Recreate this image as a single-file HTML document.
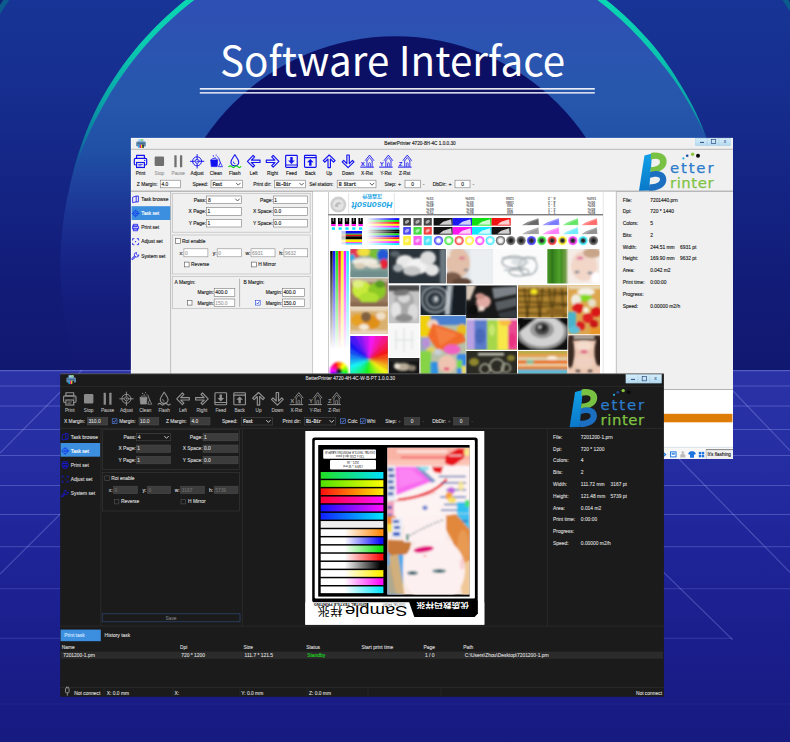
<!DOCTYPE html>
<html><head><meta charset="utf-8"><title>Software Interface</title>
<style>
*{box-sizing:border-box;margin:0;padding:0}
html,body{width:790px;height:742px;overflow:hidden}
body{position:relative;background:#14287e;font-family:"Liberation Sans",sans-serif;}
.abs{position:absolute}
#bg{position:absolute;left:0;top:0;width:790px;height:742px;overflow:hidden;background:linear-gradient(180deg,#15308c 0%,#14267f 45%,#151a78 52%,#1b2a9c 53%,#1c2796 75%,#171b86 100%)}
#title{position:absolute;left:-2.4px;top:27.4px;width:790px;text-align:center;color:#fff;font-family:"Noto Sans CJK SC","Liberation Sans",sans-serif;font-weight:400;font-size:40.3px;line-height:64px;letter-spacing:0.1px;white-space:nowrap}
.ul{position:absolute;left:199.5px;width:395.5px;height:1.5px;background:#fff}
/* light window */
#lw{position:absolute;left:131px;top:138px;width:602px;height:320px;background:#f0f0f0;overflow:hidden;font-size:6.5px;color:#222}
#dw{position:absolute;left:60px;top:373px;width:603px;height:324px;background:#1b1b1b;overflow:hidden;font-size:6.5px;color:#ddd}
</style></head><body>
<div id="bg"><svg class="abs" style="left:0;top:0" width="790" height="742" viewBox="0 0 790 742">
<defs>
<linearGradient id="gcorner" gradientUnits="userSpaceOnUse" x1="0" y1="0" x2="0" y2="370"><stop offset="0" stop-color="#101f74"/><stop offset="1" stop-color="#101668"/></linearGradient>
<linearGradient id="gout" gradientUnits="userSpaceOnUse" x1="0" y1="0" x2="0" y2="370"><stop offset="0" stop-color="#173596"/><stop offset="0.27" stop-color="#162d8e"/><stop offset="0.5" stop-color="#142484"/><stop offset="0.76" stop-color="#121c78"/><stop offset="1" stop-color="#111870"/></linearGradient>
<linearGradient id="gin" gradientUnits="userSpaceOnUse" x1="0" y1="0" x2="0" y2="370"><stop offset="0" stop-color="#2f4fb4"/><stop offset="0.16" stop-color="#2a55b0"/><stop offset="0.27" stop-color="#2657ac"/><stop offset="0.41" stop-color="#2050a6"/><stop offset="0.54" stop-color="#1d3a98"/><stop offset="0.68" stop-color="#172688"/><stop offset="0.81" stop-color="#141d7c"/><stop offset="1" stop-color="#12186f"/></linearGradient>
<linearGradient id="gteal" gradientUnits="userSpaceOnUse" x1="0" y1="0" x2="0" y2="200"><stop offset="0" stop-color="#0ad6b2"/><stop offset="0.23" stop-color="#0bcab0"/><stop offset="0.5" stop-color="#0aa6a8"/><stop offset="0.7" stop-color="#0c78a0"/><stop offset="0.88" stop-color="#14509c" stop-opacity="0.6"/><stop offset="1" stop-color="#1a3c98" stop-opacity="0"/></linearGradient>
<linearGradient id="gfloor" gradientUnits="userSpaceOnUse" x1="0" y1="370" x2="0" y2="742"><stop offset="0" stop-color="#2a32a6"/><stop offset="0.22" stop-color="#262ea4"/><stop offset="0.48" stop-color="#1f2498"/><stop offset="0.73" stop-color="#1a1e8c"/><stop offset="1" stop-color="#171a80"/></linearGradient>
</defs>
<rect width="790" height="742" fill="url(#gcorner)"/>
<circle cx="395.9" cy="264.8" r="471" fill="url(#gout)" stroke="#0b5c8c" stroke-width="5"/>
<circle cx="395.9" cy="264.8" r="335.5" fill="url(#gin)"/>
<polygon points="69,189.33 70.51,182.35 72.17,175.4 73.98,168.49 75.93,161.61 78.03,154.78 80.27,147.98 82.63,141.21 85.14,134.5 87.78,127.83 90.57,121.22 93.51,114.67 96.6,108.18 99.96,101.83 103.46,95.56 107.09,89.36 110.85,83.23 114.74,77.19 118.76,71.23 122.91,65.36 127.18,59.57 131.58,53.89 136.12,48.31 140.78,42.83 145.55,37.45 150.43,32.17 155.43,26.99 160.53,21.93 165.75,16.97 171.06,12.13 176.48,7.4 182,2.78 187.61,-1.71 193.32,-6.09 199.13,-10.34 205.02,-14.47 210.99,-18.47 217.06,-22.35 223.2,-26.09 229.42,-29.7 235.72,-33.18 242.09,-36.51 248.54,-39.72 255.05,-42.78 261.62,-45.71 268.25,-48.49 274.94,-51.14 281.69,-53.64 288.49,-55.99 295.33,-58.21 302.22,-60.27 309.16,-62.19 316.13,-63.96 323.14,-65.58 330.18,-67.06 337.25,-68.38 344.35,-69.55 351.47,-70.57 358.61,-71.44 365.77,-72.16 372.94,-72.72 380.13,-73.13 387.32,-73.39 394.51,-73.5 401.7,-73.45 408.9,-73.25 416.08,-72.9 423.26,-72.39 430.42,-71.73 437.57,-70.92 444.7,-69.96 451.81,-68.85 458.89,-67.58 465.95,-66.17 472.97,-64.6 479.95,-62.89 486.9,-61.03 493.81,-59.02 500.68,-56.87 507.49,-54.56 514.26,-52.12 520.97,-49.53 527.63,-46.8 534.22,-43.93 540.76,-40.92 547.23,-37.77 553.63,-34.48 559.95,-31.06 566.21,-27.5 572.38,-23.81 578.47,-19.98 584.49,-16.03 590.41,-11.95 596.25,-7.75 601.99,-3.42 607.64,1.03 613.2,5.6 618.65,10.29 624.01,15.09 629.26,20.01 634.41,25.03 639.44,30.16 644.37,35.4 649.19,40.75 653.88,46.19 658.35,51.83 662.66,57.58 666.84,63.42 670.89,69.35 674.82,75.36 678.61,81.44 682.29,87.59 685.92,93.76 689.42,100.01 692.78,106.33 695.99,112.73 698.95,119.24 701.77,125.81 704.44,132.44 706.97,139.12 706.97,139.12 704.01,132.62 700.92,126.2 697.7,119.84 694.34,113.56 690.97,107.3 687.48,101.1 683.86,94.98 680.11,88.94 676.15,83.03 672.05,77.23 667.84,71.52 663.5,65.9 659.05,60.39 654.48,54.97 649.84,49.62 645.2,44.27 640.44,39.03 635.58,33.89 630.61,28.85 625.53,23.92 620.35,19.1 615.07,14.39 609.69,9.79 604.21,5.31 598.64,0.95 592.98,-3.3 587.23,-7.42 581.39,-11.42 575.47,-15.3 569.47,-19.05 563.39,-22.67 557.24,-26.16 551.02,-29.53 544.72,-32.76 538.36,-35.86 531.93,-38.82 525.45,-41.64 518.9,-44.33 512.3,-46.87 505.65,-49.28 498.94,-51.54 492.19,-53.66 485.4,-55.64 478.56,-57.47 471.69,-59.15 464.79,-60.69 457.85,-62.08 450.88,-63.33 443.89,-64.42 436.88,-65.37 429.85,-66.16 422.81,-66.81 415.75,-67.31 408.68,-67.65 401.61,-67.85 394.53,-67.9 387.46,-67.79 380.39,-67.54 373.32,-67.13 366.27,-66.58 359.23,-65.87 352.21,-65.02 345.2,-64.01 338.22,-62.86 331.27,-61.56 324.34,-60.11 317.45,-58.52 310.59,-56.78 303.77,-54.89 297,-52.86 290.26,-50.68 283.58,-48.37 276.94,-45.91 270.36,-43.31 263.84,-40.57 257.38,-37.69 250.98,-34.68 244.64,-31.53 238.37,-28.24 232.18,-24.83 226.05,-21.28 220,-17.61 214.03,-13.82 208.15,-9.89 202.34,-5.84 196.63,-1.67 191,2.62 185.47,7.03 180.03,11.56 174.68,16.2 169.44,20.95 164.3,25.82 159.27,30.79 154.34,35.87 149.52,41.05 144.81,46.33 140.21,51.72 135.73,57.2 131.36,62.76 127.09,68.41 122.94,74.15 118.91,79.97 115.01,85.88 111.23,91.87 107.59,97.95 104.07,104.1 100.68,110.32 97.29,116.55 94.01,122.84 90.87,129.21 87.86,135.64 84.98,142.14 82.25,148.71 79.68,155.34 77.26,162.04 74.98,168.79 72.84,175.59 70.85,182.44 69,189.33" fill="url(#gteal)"/>
<circle cx="395.4" cy="265.9" r="229.6" fill="#0b1065"/>
<rect x="0" y="370" width="790" height="372" fill="url(#gfloor)"/>
<g stroke="#aab4ff" stroke-opacity="0.3" stroke-width="1.15" fill="none">
<path d="M0 370.6H790" stroke-opacity="0.34"/><path d="M0 386H790M0 406H790M0 429.5H790M0 455.5H790M0 485.5H790M0 514.5H790"/>
<path d="M0 546.6H790" stroke-opacity="0.22"/><path d="M0 588.6H790" stroke-opacity="0.16"/><path d="M0 638.4H732.5" stroke-opacity="0.14"/><path d="M0 704H790" stroke-opacity="0.06"/>
<path d="M713 370L790 450.5M592 370L790 572.4M457 370L732.5 639.7"/>
<path d="M82 370L0 453M205 370L0 574"/>
</g>
</svg></div>
<div id="title">Software Interface</div>
<svg class="abs" style="left:0;top:80px" width="790" height="20"><rect x="199.8" y="8.1" width="395" height="1.5" fill="#fff"/><rect x="199.8" y="12.1" width="395" height="1.5" fill="#ebe8f6"/></svg>
<svg class="abs" style="left:0;top:0" width="790" height="742" viewBox="0 0 790 742" font-family="Liberation Sans, sans-serif">
<g id="lightwin"><rect x="131" y="138" width="602" height="320.9" fill="#f0f0f0"/>
<line x1="131.3" y1="138" x2="131.3" y2="458.9" stroke="#fff" stroke-width="0.6" /><line x1="131" y1="138.3" x2="733" y2="138.3" stroke="#fff" stroke-width="0.6" />
<line x1="131" y1="149.3" x2="733" y2="149.3" stroke="#a0a0a0" stroke-width="0.7" />
<g transform="translate(141 143.5)"><rect x="-2.6" y="-4.4" width="5.2" height="3" fill="#9cd0f4"/><rect x="0.2" y="-4.4" width="1.6" height="1.6" fill="#8cd848"/><rect x="-4.8" y="-2" width="9.6" height="5" rx="1.2" fill="#5f8aae"/><rect x="-3.6" y="-0.6" width="7.2" height="1" fill="#3f6a8e"/><rect x="-2.7" y="1.2" width="1.35" height="3.3" fill="#10b4ea"/><rect x="-1.35" y="1.2" width="1.35" height="3.3" fill="#e8188c"/><rect x="0" y="1.2" width="1.35" height="3.3" fill="#f8d410"/><rect x="1.35" y="1.2" width="1.35" height="3.3" fill="#1a1a1a"/></g>
<text x="420" y="144.89" font-size="4.7" fill="#222" text-anchor="middle" stroke="#222" stroke-width="0.13" >BetterPrinter 4720-8H-4C 1.0.0.30</text>
<defs><linearGradient id="gbtn" x1="0" y1="0" x2="0" y2="1"><stop offset="0" stop-color="#d8eefa"/><stop offset="0.5" stop-color="#c6e4f6"/><stop offset="1" stop-color="#b2d8ee"/></linearGradient></defs>
<rect x="695.3" y="138.2" width="35.3" height="7.5" fill="url(#gbtn)" stroke="#a8cce0" stroke-width="0.4"/>
<line x1="707.1" y1="138.2" x2="707.1" y2="145.7" stroke="#a0c6dc" stroke-width="0.4" /><line x1="718.9" y1="138.2" x2="718.9" y2="145.7" stroke="#a0c6dc" stroke-width="0.4" />
<line x1="700" y1="142.4" x2="704" y2="142.4" stroke="#1c3c6c" stroke-width="0.9" />
<rect x="711.3" y="139.4" width="4.4" height="4.2" fill="none" stroke="#2c4c7c" stroke-width="0.7"/>
<text x="724.9" y="143.4" font-size="5" fill="#3c5c8c" text-anchor="middle" stroke="#3c5c8c" stroke-width="0.13" >x</text>
<g transform="translate(140.5 161.3)" ><rect x="-3.9" y="-6" width="7.8" height="3.2" stroke="#1212f0" stroke-width="1.15" fill="none" stroke-linejoin="round" stroke-linecap="round"/><rect x="-6.2" y="-2.9" width="12.4" height="6.6" rx="1.2" stroke="#1212f0" stroke-width="1.15" fill="none" stroke-linejoin="round" stroke-linecap="round"/><rect x="-3.9" y="1.2" width="7.8" height="5" fill="#f0f0f0" stroke="#1212f0" stroke-width="1.15"/><path d="M-2.2 3.2H2.2M-2.2 4.6H1" stroke="#1212f0" stroke-width="0.7"/><circle cx="4.2" cy="-0.9" r="0.7" fill="#1212f0"/></g>
<text x="140.5" y="174.79" font-size="4.7" fill="#222" text-anchor="middle" stroke="#222" stroke-width="0.13" >Print</text>
<g transform="translate(159.37 161.3)" ><rect x="-4.7" y="-4.7" width="9.4" height="9.4" rx="1.1" fill="#707070"/></g>
<text x="159.37" y="174.79" font-size="4.7" fill="#9a9a9a" text-anchor="middle" stroke="#9a9a9a" stroke-width="0.13" >Stop</text>
<g transform="translate(178.24 161.3)" ><rect x="-3.9" y="-6" width="2.3" height="12" rx="0.5" fill="#707070"/><rect x="1.7" y="-6" width="2.3" height="12" rx="0.5" fill="#707070"/></g>
<text x="178.24" y="174.79" font-size="4.7" fill="#9a9a9a" text-anchor="middle" stroke="#9a9a9a" stroke-width="0.13" >Pause</text>
<g transform="translate(197.11 161.3)" ><circle r="4.5" stroke="#1212f0" stroke-width="0.95" fill="none" stroke-linejoin="round" stroke-linecap="round"/><circle r="2" stroke="#1212f0" stroke-width="0.85" fill="none" stroke-linejoin="round" stroke-linecap="round"/><circle r="0.75" fill="#1212f0"/><path d="M0 -6.7V-2.6M0 6.7V2.6M-6.7 0H-2.6M6.7 0H2.6" stroke="#1212f0" stroke-width="0.95" fill="none" stroke-linejoin="round" stroke-linecap="round"/></g>
<text x="197.11" y="174.79" font-size="4.7" fill="#222" text-anchor="middle" stroke="#222" stroke-width="0.13" >Adjust</text>
<g transform="translate(215.98 161.3)" ><path d="M-5.3 -1.4H1.7L1.2 5.3H-4.7Z" fill="#1212f0" stroke="#1212f0" stroke-width="0.7" stroke-linejoin="round"/><path d="M-4.9 -1.5C-4.4 -3.5 0.8 -3.5 1.4 -1.5" stroke="#1212f0" stroke-width="0.8" fill="none" stroke-linejoin="round" stroke-linecap="round"/><circle cx="-2.6" cy="-5.4" r="0.65" fill="#1212f0"/><circle cx="0.2" cy="-6.2" r="0.55" fill="#1212f0"/><circle cx="-0.9" cy="-4.1" r="0.55" fill="#1212f0"/><circle cx="1.6" cy="-4.6" r="0.5" fill="#1212f0"/><path d="M2.7 -3.4L4.5 1.6" stroke="#1212f0" stroke-width="0.9" fill="none" stroke-linejoin="round" stroke-linecap="round"/><path d="M4.3 1.3L6.5 5.4H2.5Z" fill="#f0f0f0" stroke="#1212f0" stroke-width="0.8" stroke-linejoin="round"/></g>
<text x="215.98" y="174.79" font-size="4.7" fill="#222" text-anchor="middle" stroke="#222" stroke-width="0.13" >Clean</text>
<g transform="translate(234.85 161.3)" ><path d="M0 -6.6C1.6 -4 3.9 -1.4 3.9 0.7A3.9 3.9 0 0 1 -3.9 0.7C-3.9 -1.4 -1.6 -4 0 -6.6Z" stroke="#1212f0" stroke-width="1.15" fill="none" stroke-linejoin="round" stroke-linecap="round"/><path d="M-1.6 0.6A1.7 1.7 0 0 0 0 2.4" stroke="#1212f0" stroke-width="0.8" fill="none" stroke-linejoin="round" stroke-linecap="round"/><path d="M-6 5.4Q-4.5 3.6 -3 5.4T0 5.4T3 5.4T6 5.4" stroke="#16d416" stroke-width="1.2" fill="none" stroke-linecap="round"/></g>
<text x="234.85" y="174.79" font-size="4.7" fill="#222" text-anchor="middle" stroke="#222" stroke-width="0.13" >Flash</text>
<g transform="translate(253.72 161.3)" ><path d="M-6.3 0L-0.6 -5.9L0.9 -4.4L-2.3 -1.2H6.3V1.2H-2.3L0.9 4.4L-0.6 5.9Z" stroke="#1212f0" stroke-width="1.15" fill="none" stroke-linejoin="round" stroke-linecap="round"/></g>
<text x="253.72" y="174.79" font-size="4.7" fill="#222" text-anchor="middle" stroke="#222" stroke-width="0.13" >Left</text>
<g transform="translate(272.59 161.3)" ><path d="M-6.3 0L-0.6 -5.9L0.9 -4.4L-2.3 -1.2H6.3V1.2H-2.3L0.9 4.4L-0.6 5.9Z" transform="scale(-1 1)" stroke="#1212f0" stroke-width="1.15" fill="none" stroke-linejoin="round" stroke-linecap="round"/></g>
<text x="272.59" y="174.79" font-size="4.7" fill="#222" text-anchor="middle" stroke="#222" stroke-width="0.13" >Right</text>
<g transform="translate(291.46 161.3)" ><rect x="-5.8" y="-6" width="11.6" height="12" rx="0.8" stroke="#1212f0" stroke-width="1.15" fill="none" stroke-linejoin="round" stroke-linecap="round"/><path d="M-5.8 3.7H5.8" stroke="#1212f0" stroke-width="1.15" fill="none" stroke-linejoin="round" stroke-linecap="round"/><path d="M-1.2 -4.2H1.2V-0.8H3.3L0 2.6L-3.3 -0.8H-1.2Z" fill="#1212f0"/></g>
<text x="291.46" y="174.79" font-size="4.7" fill="#222" text-anchor="middle" stroke="#222" stroke-width="0.13" >Feed</text>
<g transform="translate(310.33 161.3)" ><rect x="-5.8" y="-6" width="11.6" height="12" rx="0.8" stroke="#1212f0" stroke-width="1.15" fill="none" stroke-linejoin="round" stroke-linecap="round"/><path d="M-5.8 -3.7H5.8" stroke="#1212f0" stroke-width="1.15" fill="none" stroke-linejoin="round" stroke-linecap="round"/><path d="M-1.2 4.4H1.2V1H3.3L0 -2.4L-3.3 1H-1.2Z" fill="#1212f0"/></g>
<text x="310.33" y="174.79" font-size="4.7" fill="#222" text-anchor="middle" stroke="#222" stroke-width="0.13" >Back</text>
<g transform="translate(329.2 161.3)" ><path d="M-6.3 0L-0.6 -5.9L0.9 -4.4L-2.3 -1.2H6.3V1.2H-2.3L0.9 4.4L-0.6 5.9Z" transform="rotate(90)" stroke="#1212f0" stroke-width="1.15" fill="none" stroke-linejoin="round" stroke-linecap="round"/></g>
<text x="329.2" y="174.79" font-size="4.7" fill="#222" text-anchor="middle" stroke="#222" stroke-width="0.13" >Up</text>
<g transform="translate(348.07 161.3)" ><path d="M-6.3 0L-0.6 -5.9L0.9 -4.4L-2.3 -1.2H6.3V1.2H-2.3L0.9 4.4L-0.6 5.9Z" transform="rotate(-90)" stroke="#1212f0" stroke-width="1.15" fill="none" stroke-linejoin="round" stroke-linecap="round"/></g>
<text x="348.07" y="174.79" font-size="4.7" fill="#222" text-anchor="middle" stroke="#222" stroke-width="0.13" >Down</text>
<g transform="translate(366.94 161.3)" ><path d="M-1.6 -0.9L2.6 -6.2L6.8 -0.9" stroke="#1212f0" stroke-width="0.9" fill="none" stroke-linejoin="round" stroke-linecap="round"/><path d="M0 -0.4L2.6 -3.8L5.2 -0.4" stroke="#1212f0" stroke-width="0.7" fill="none" stroke-linejoin="round" stroke-linecap="round"/><path d="M0 -0.4V5M5.2 -0.4V5" stroke="#1212f0" stroke-width="0.8" fill="none" stroke-linejoin="round" stroke-linecap="round"/><path d="M1.7 5V2.3A0.9 0.9 0 0 1 3.5 2.3V5" stroke="#1212f0" stroke-width="0.7" fill="none" stroke-linejoin="round" stroke-linecap="round"/><text x="-4.1" y="4.6" font-size="6" font-weight="bold" text-anchor="middle" fill="#1212f0">X</text><path d="M-6.7 5.8H6.9" stroke="#1212f0" stroke-width="1"/></g>
<text x="366.94" y="174.79" font-size="4.7" fill="#222" text-anchor="middle" stroke="#222" stroke-width="0.13" >X-Rst</text>
<g transform="translate(385.81 161.3)" ><path d="M-1.6 -0.9L2.6 -6.2L6.8 -0.9" stroke="#1212f0" stroke-width="0.9" fill="none" stroke-linejoin="round" stroke-linecap="round"/><path d="M0 -0.4L2.6 -3.8L5.2 -0.4" stroke="#1212f0" stroke-width="0.7" fill="none" stroke-linejoin="round" stroke-linecap="round"/><path d="M0 -0.4V5M5.2 -0.4V5" stroke="#1212f0" stroke-width="0.8" fill="none" stroke-linejoin="round" stroke-linecap="round"/><path d="M1.7 5V2.3A0.9 0.9 0 0 1 3.5 2.3V5" stroke="#1212f0" stroke-width="0.7" fill="none" stroke-linejoin="round" stroke-linecap="round"/><text x="-4.1" y="4.6" font-size="6" font-weight="bold" text-anchor="middle" fill="#1212f0">Y</text><path d="M-6.7 5.8H6.9" stroke="#1212f0" stroke-width="1"/></g>
<text x="385.81" y="174.79" font-size="4.7" fill="#222" text-anchor="middle" stroke="#222" stroke-width="0.13" >Y-Rst</text>
<g transform="translate(404.68 161.3)" ><path d="M-1.6 -0.9L2.6 -6.2L6.8 -0.9" stroke="#1212f0" stroke-width="0.9" fill="none" stroke-linejoin="round" stroke-linecap="round"/><path d="M0 -0.4L2.6 -3.8L5.2 -0.4" stroke="#1212f0" stroke-width="0.7" fill="none" stroke-linejoin="round" stroke-linecap="round"/><path d="M0 -0.4V5M5.2 -0.4V5" stroke="#1212f0" stroke-width="0.8" fill="none" stroke-linejoin="round" stroke-linecap="round"/><path d="M1.7 5V2.3A0.9 0.9 0 0 1 3.5 2.3V5" stroke="#1212f0" stroke-width="0.7" fill="none" stroke-linejoin="round" stroke-linecap="round"/><text x="-4.1" y="4.6" font-size="6" font-weight="bold" text-anchor="middle" fill="#1212f0">Z</text><path d="M-6.7 5.8H6.9" stroke="#1212f0" stroke-width="1"/></g>
<text x="404.68" y="174.79" font-size="4.7" fill="#222" text-anchor="middle" stroke="#222" stroke-width="0.13" >Z-Rst</text>
<text x="157.5" y="185.76" font-size="4.9" fill="#222" text-anchor="end" stroke="#222" stroke-width="0.13" >Z Margin:</text>
<rect x="160.5" y="180.2" width="19.8" height="7.6" fill="#fff" stroke="#7a7a7a" stroke-width="0.6"/><text x="161.5" y="185.76" font-size="4.9" fill="#222" stroke="#222" stroke-width="0.13" >4.0</text>
<text x="208" y="185.76" font-size="4.9" fill="#222" text-anchor="end" stroke="#222" stroke-width="0.13" >Speed:</text>
<rect x="211" y="180.2" width="31.3" height="7.6" fill="#fff" stroke="#7a7a7a" stroke-width="0.6"/><text x="212.5" y="185.76" font-size="4.9" fill="#333" stroke="#333" stroke-width="0.13" font-family="Liberation Mono,monospace" font-weight="bold" textLength="10.2">Fast</text><path d="M236.1 182.9L238.3 185.2L240.5 182.9" fill="none" stroke="#444" stroke-width="0.85"/>
<text x="271.4" y="185.76" font-size="4.9" fill="#222" text-anchor="end" stroke="#222" stroke-width="0.13" >Print dir:</text>
<rect x="274.4" y="180.2" width="31.2" height="7.6" fill="#fff" stroke="#7a7a7a" stroke-width="0.6"/><text x="275.9" y="185.76" font-size="4.9" fill="#333" stroke="#333" stroke-width="0.13" font-family="Liberation Mono,monospace" font-weight="bold" textLength="15.3">Bi-Dir</text><path d="M299.4 182.9L301.6 185.2L303.8 182.9" fill="none" stroke="#444" stroke-width="0.85"/>
<text x="333.4" y="185.76" font-size="4.9" fill="#222" text-anchor="end" stroke="#222" stroke-width="0.13" >Sel station:</text>
<rect x="337.2" y="180.2" width="38.8" height="7.6" fill="#fff" stroke="#7a7a7a" stroke-width="0.6"/><text x="338.7" y="185.76" font-size="4.9" fill="#333" stroke="#333" stroke-width="0.13" font-family="Liberation Mono,monospace" font-weight="bold" textLength="17.85">B Start</text><path d="M369.8 182.9L372 185.2L374.2 182.9" fill="none" stroke="#444" stroke-width="0.85"/>
<text x="396" y="185.76" font-size="4.9" fill="#222" text-anchor="end" stroke="#222" stroke-width="0.13" >Step:</text><text x="399.5" y="185.94" font-size="5.4" fill="#333" text-anchor="middle" stroke="#333" stroke-width="0.13" >+</text>
<rect x="405" y="180.2" width="15.3" height="7.6" fill="#fff" stroke="#7a7a7a" stroke-width="0.6"/><text x="412.65" y="185.76" font-size="4.9" fill="#222" text-anchor="middle" stroke="#222" stroke-width="0.13" >0</text>
<text x="423.6" y="185.94" font-size="5.4" fill="#333" text-anchor="middle" stroke="#333" stroke-width="0.13" >-</text>
<text x="446.5" y="185.76" font-size="4.9" fill="#222" text-anchor="end" stroke="#222" stroke-width="0.13" >DbDir:</text><text x="450" y="185.94" font-size="5.4" fill="#333" text-anchor="middle" stroke="#333" stroke-width="0.13" >+</text>
<rect x="455" y="180.2" width="15" height="7.6" fill="#fff" stroke="#7a7a7a" stroke-width="0.6"/><text x="462.5" y="185.76" font-size="4.9" fill="#222" text-anchor="middle" stroke="#222" stroke-width="0.13" >0</text>
<text x="473.5" y="185.94" font-size="5.4" fill="#333" text-anchor="middle" stroke="#333" stroke-width="0.13" >-</text>
<line x1="131" y1="191.2" x2="733" y2="191.2" stroke="#8c8c8c" stroke-width="0.8" />
<g transform="translate(639 152.4) scale(1.05 1)"><defs><linearGradient id="lgb0" x1="0" y1="0" x2="0" y2="1"><stop offset="0" stop-color="#12a0e8"/><stop offset="1" stop-color="#0a78c8"/></linearGradient></defs><path d="M5.2 3.2L12.5 1.2L9.6 38.2L0 38.4Z" fill="url(#lgb0)"/><path d="M11.5 0.6C20 -1.2 27.5 2.5 26.2 10.5C25.4 15.5 21.6 18.6 16.2 19.6L10.8 20.2L11.3 14.6C16.2 14.6 19.8 13 20 9.6C20.2 6.4 16.6 5.6 11.2 7Z" fill="#79c143"/><path d="M10.6 19.6C19.5 16.5 26.6 20.6 26 28C25.4 35 18 38.4 9.4 38.3L9.9 32C15.6 32 19.8 30.4 20 27.2C20.2 23.8 16 23.6 10.3 25.4Z" fill="#1c6fc0"/></g><text x="670" y="173.36" font-size="14.9" fill="#2b7ccb" font-family="DejaVu Sans,Liberation Sans,sans-serif" stroke="#2b7ccb" stroke-width="0.25" textLength="43.5">etter</text><text x="670" y="188.36" font-size="14.9" fill="#80c342" font-family="DejaVu Sans,Liberation Sans,sans-serif" stroke="#80c342" stroke-width="0.25" textLength="43.5">rinter</text><circle cx="683.4" cy="158.4" r="1.1" fill="#29abe2"/><circle cx="687.2" cy="155.8" r="1.3" fill="#1b4fa0"/><circle cx="692.6" cy="154.2" r="1.7" fill="#8cc63f"/><circle cx="698" cy="155.8" r="2" fill="#0a0a0a"/>
<rect x="131.5" y="206.2" width="38.9" height="13.8" fill="#3c8ede"/>
<line x1="170.6" y1="191.5" x2="170.6" y2="389.5" stroke="#9a9a9a" stroke-width="0.6" />
<g transform="translate(135.6 199.3)"><path d="M-2.6 -2.2L0.6 -3.2V2.6L-2.6 3.2Z M0.6 -3.2H2.8V2.6H0.6" fill="none" stroke="#1212f0" stroke-width="0.8" stroke-linejoin="round" stroke-linecap="round"/></g>
<text x="141.2" y="201.06" font-size="4.9" fill="#222" stroke="#222" stroke-width="0.13" >Task browse</text>
<g transform="translate(135.6 213.42)"><circle r="2.6" fill="none" stroke="#1038ee" stroke-width="0.8" stroke-linejoin="round" stroke-linecap="round"/><circle r="1" fill="none" stroke="#1038ee" stroke-width="0.8" stroke-linejoin="round" stroke-linecap="round"/><path d="M0 -3.4V-2.6M0 3.4V2.6M-3.4 0H-2.6M3.4 0H2.6" fill="none" stroke="#1038ee" stroke-width="0.8" stroke-linejoin="round" stroke-linecap="round"/></g>
<text x="141.2" y="215.18" font-size="4.9" fill="#fff" stroke="#fff" stroke-width="0.13" >Task set</text>
<g transform="translate(135.6 227.54)"><rect x="-2" y="-3.2" width="4" height="1.8" fill="none" stroke="#1212f0" stroke-width="0.8" stroke-linejoin="round" stroke-linecap="round"/><rect x="-3" y="-1.4" width="6" height="3" rx="0.5" fill="none" stroke="#1212f0" stroke-width="0.8" stroke-linejoin="round" stroke-linecap="round"/><rect x="-1.9" y="0.6" width="3.8" height="2.6" fill="none" stroke="#1212f0" stroke-width="0.8" stroke-linejoin="round" stroke-linecap="round"/></g>
<text x="141.2" y="229.3" font-size="4.9" fill="#222" stroke="#222" stroke-width="0.13" >Print set</text>
<g transform="translate(135.6 241.66)"><path d="M-3 -1.6V-3H-1.6M1.6 -3H3V-1.6M3 1.6V3H1.6M-1.6 3H-3V1.6" fill="none" stroke="#1212f0" stroke-width="0.8" stroke-linejoin="round" stroke-linecap="round"/><circle r="0.6" fill="#1212f0"/></g>
<text x="141.2" y="243.42" font-size="4.9" fill="#222" stroke="#222" stroke-width="0.13" >Adjust set</text>
<g transform="translate(135.6 255.78)"><path d="M-3.1 3.1L0.3 -0.3" stroke="#1212f0" stroke-width="2.1" stroke-linecap="round" fill="none"/><path d="M-3.1 3.1L0.3 -0.3" stroke="#f0f0f0" stroke-width="0.8" stroke-linecap="round" fill="none"/><path d="M0.9 -3.3A2.3 2.3 0 1 0 3.3 -0.9L1.9 -0.5L0.6 -1.8Z" fill="#f0f0f0" stroke="#1212f0" stroke-width="0.75" stroke-linejoin="round"/></g>
<text x="141.2" y="257.54" font-size="4.9" fill="#222" stroke="#222" stroke-width="0.13" >System set</text>
<rect x="172.6" y="193.5" width="137.6" height="38.7" fill="none" stroke="#bdbdbd" stroke-width="0.7"/>
<rect x="172.6" y="235" width="137.6" height="39" fill="none" stroke="#bdbdbd" stroke-width="0.7"/>
<rect x="172.6" y="276.6" width="137.6" height="32" fill="none" stroke="#bdbdbd" stroke-width="0.7"/>
<line x1="312.8" y1="191.5" x2="312.8" y2="389.5" stroke="#9a9a9a" stroke-width="0.6" />
<text x="206" y="201.56" font-size="4.9" fill="#222" text-anchor="end" stroke="#222" stroke-width="0.13" >Pass:</text><rect x="206.6" y="196" width="34.9" height="7.6" fill="#fff" stroke="#7a7a7a" stroke-width="0.6"/><text x="208.1" y="201.56" font-size="4.9" fill="#333" stroke="#333" stroke-width="0.13" >8</text><path d="M235.3 198.7L237.5 201L239.7 198.7" fill="none" stroke="#444" stroke-width="0.85"/>
<text x="206" y="213.26" font-size="4.9" fill="#222" text-anchor="end" stroke="#222" stroke-width="0.13" >X Page:</text><rect x="206.6" y="207.6" width="34.9" height="7.7" fill="#fff" stroke="#7a7a7a" stroke-width="0.6"/><text x="207.6" y="213.21" font-size="4.9" fill="#222" stroke="#222" stroke-width="0.13" >1</text>
<text x="206" y="224.96" font-size="4.9" fill="#222" text-anchor="end" stroke="#222" stroke-width="0.13" >Y Page:</text><rect x="206.6" y="219.4" width="34.9" height="7.6" fill="#fff" stroke="#7a7a7a" stroke-width="0.6"/><text x="207.6" y="224.96" font-size="4.9" fill="#222" stroke="#222" stroke-width="0.13" >1</text>
<text x="272.8" y="201.56" font-size="4.9" fill="#222" text-anchor="end" stroke="#222" stroke-width="0.13" >Page:</text><rect x="273.3" y="196" width="34.4" height="7.6" fill="#fff" stroke="#7a7a7a" stroke-width="0.6"/><text x="274.3" y="201.56" font-size="4.9" fill="#222" stroke="#222" stroke-width="0.13" >1</text>
<text x="272.8" y="213.26" font-size="4.9" fill="#222" text-anchor="end" stroke="#222" stroke-width="0.13" >X Space:</text><rect x="273.3" y="207.6" width="34.4" height="7.7" fill="#fff" stroke="#7a7a7a" stroke-width="0.6"/><text x="274.3" y="213.21" font-size="4.9" fill="#222" stroke="#222" stroke-width="0.13" >0.0</text>
<text x="272.8" y="224.96" font-size="4.9" fill="#222" text-anchor="end" stroke="#222" stroke-width="0.13" >Y Space:</text><rect x="273.3" y="219.4" width="34.4" height="7.6" fill="#fff" stroke="#7a7a7a" stroke-width="0.6"/><text x="274.3" y="224.96" font-size="4.9" fill="#222" stroke="#222" stroke-width="0.13" >0.0</text>
<rect x="175.5" y="238.6" width="4.8" height="4.8" fill="#fff" stroke="#555" stroke-width="0.6"/><text x="182" y="242.76" font-size="4.9" fill="#222" stroke="#222" stroke-width="0.13" >Roi enable</text>
<text x="183.2" y="254.56" font-size="4.9" fill="#222" text-anchor="end" stroke="#222" stroke-width="0.13" >x:</text><rect x="183.9" y="248.8" width="24" height="8" fill="#fff" stroke="#8a8a8a" stroke-width="0.6"/><text x="184.9" y="254.56" font-size="4.9" fill="#a0a0a0" stroke="#a0a0a0" stroke-width="0.13" >0</text>
<text x="216.6" y="254.56" font-size="4.9" fill="#222" text-anchor="end" stroke="#222" stroke-width="0.13" >y:</text><rect x="217.2" y="248.8" width="24.3" height="8" fill="#fff" stroke="#8a8a8a" stroke-width="0.6"/><text x="218.2" y="254.56" font-size="4.9" fill="#a0a0a0" stroke="#a0a0a0" stroke-width="0.13" >0</text>
<text x="250.4" y="254.56" font-size="4.9" fill="#222" text-anchor="end" stroke="#222" stroke-width="0.13" >w:</text><rect x="251" y="248.8" width="24" height="8" fill="#fff" stroke="#8a8a8a" stroke-width="0.6"/><text x="252" y="254.56" font-size="4.9" fill="#a0a0a0" stroke="#a0a0a0" stroke-width="0.13" >6931</text>
<text x="283.4" y="254.56" font-size="4.9" fill="#222" text-anchor="end" stroke="#222" stroke-width="0.13" >h:</text><rect x="284" y="248.8" width="23.7" height="8" fill="#fff" stroke="#8a8a8a" stroke-width="0.6"/><text x="285" y="254.56" font-size="4.9" fill="#a0a0a0" stroke="#a0a0a0" stroke-width="0.13" >9632</text>
<rect x="184.3" y="262.1" width="4.8" height="4.8" fill="#fff" stroke="#555" stroke-width="0.6"/><text x="191" y="266.26" font-size="4.9" fill="#222" stroke="#222" stroke-width="0.13" >Reverse</text>
<rect x="251.5" y="262.1" width="4.8" height="4.8" fill="#fff" stroke="#555" stroke-width="0.6"/><text x="258.2" y="266.26" font-size="4.9" fill="#222" stroke="#222" stroke-width="0.13" >H Mirror</text>
<text x="174.6" y="283.76" font-size="4.9" fill="#222" stroke="#222" stroke-width="0.13" >A Margin:</text><text x="243.4" y="283.76" font-size="4.9" fill="#222" stroke="#222" stroke-width="0.13" >B Margin:</text>
<line x1="239.6" y1="278.6" x2="239.6" y2="306.8" stroke="#8a8a8a" stroke-width="0.6" />
<text x="213.8" y="294.26" font-size="4.9" fill="#222" text-anchor="end" stroke="#222" stroke-width="0.13" >Margin:</text><rect x="214.2" y="288.6" width="20.6" height="7.7" fill="#fff" stroke="#7a7a7a" stroke-width="0.6"/><text x="215.2" y="294.21" font-size="4.9" fill="#222" stroke="#222" stroke-width="0.13" >400.0</text>
<rect x="187.4" y="300.5" width="4.6" height="4.6" fill="#fff" stroke="#555" stroke-width="0.6"/><text x="213.8" y="304.56" font-size="4.9" fill="#222" text-anchor="end" stroke="#222" stroke-width="0.13" >Margin:</text><rect x="214.2" y="299" width="20.6" height="7.6" fill="#fff" stroke="#7a7a7a" stroke-width="0.6"/><text x="215.2" y="304.56" font-size="4.9" fill="#a0a0a0" stroke="#a0a0a0" stroke-width="0.13" >150.0</text>
<text x="282" y="294.26" font-size="4.9" fill="#222" text-anchor="end" stroke="#222" stroke-width="0.13" >Margin:</text><rect x="282.4" y="288.6" width="22.3" height="7.7" fill="#fff" stroke="#7a7a7a" stroke-width="0.6"/><text x="283.4" y="294.21" font-size="4.9" fill="#222" stroke="#222" stroke-width="0.13" >400.0</text>
<rect x="255.6" y="300.5" width="4.6" height="4.6" fill="#fff" stroke="#2244dd" stroke-width="0.6"/><path d="M256.6 302.8L257.6 304L259.3 301.5" fill="none" stroke="#2244dd" stroke-width="0.8"/><text x="282" y="304.56" font-size="4.9" fill="#222" text-anchor="end" stroke="#222" stroke-width="0.13" >Margin:</text><rect x="282.4" y="299" width="22.3" height="7.6" fill="#fff" stroke="#7a7a7a" stroke-width="0.6"/><text x="283.4" y="304.56" font-size="4.9" fill="#222" stroke="#222" stroke-width="0.13" >150.0</text>
<rect x="313.1" y="191.6" width="303.1" height="197.9" fill="#fff"/>
<defs><filter id="bl" x="-20%" y="-20%" width="140%" height="140%"><feGaussianBlur stdDeviation="0.9"/></filter><filter id="bl2" x="-20%" y="-20%" width="140%" height="140%"><feGaussianBlur stdDeviation="1.6"/></filter><linearGradient id="hk" x1="0" y1="0" x2="1" y2="0"><stop offset="0" stop-color="#fff"/><stop offset="0.05" stop-color="#fff"/><stop offset="0.92" stop-color="#000"/><stop offset="1" stop-color="#000"/></linearGradient><linearGradient id="wk" x1="0" y1="0" x2="1" y2="0"><stop offset="0" stop-color="#fff"/><stop offset="0.38" stop-color="#fff"/><stop offset="0.95" stop-color="#000"/><stop offset="1" stop-color="#000"/></linearGradient><linearGradient id="vk" x1="0" y1="0" x2="0" y2="1"><stop offset="0" stop-color="#000"/><stop offset="0.5" stop-color="#000" stop-opacity="0.45"/><stop offset="0.95" stop-color="#000" stop-opacity="0"/></linearGradient><radialGradient id="rlk"><stop offset="0" stop-color="#fff"/><stop offset="0.3" stop-color="#fff"/><stop offset="0.8" stop-color="#4c4c4c"/><stop offset="1" stop-color="#262626" stop-opacity="0.7"/></radialGradient><radialGradient id="rdk"><stop offset="0" stop-color="#1a1a1a"/><stop offset="0.3" stop-color="#333"/><stop offset="0.75" stop-color="#3f3f3f"/><stop offset="1" stop-color="#333333" stop-opacity="0.6"/></radialGradient><linearGradient id="hb" x1="0" y1="0" x2="1" y2="0"><stop offset="0" stop-color="#fff"/><stop offset="0.05" stop-color="#fff"/><stop offset="0.92" stop-color="#1010ff"/><stop offset="1" stop-color="#1010ff"/></linearGradient><linearGradient id="wb" x1="0" y1="0" x2="1" y2="0"><stop offset="0" stop-color="#fff"/><stop offset="0.38" stop-color="#fff"/><stop offset="0.95" stop-color="#1010ff"/><stop offset="1" stop-color="#1010ff"/></linearGradient><linearGradient id="vb" x1="0" y1="0" x2="0" y2="1"><stop offset="0" stop-color="#1010ff"/><stop offset="0.5" stop-color="#1010ff" stop-opacity="0.45"/><stop offset="0.95" stop-color="#1010ff" stop-opacity="0"/></linearGradient><radialGradient id="rlb"><stop offset="0" stop-color="#fff"/><stop offset="0.3" stop-color="#fff"/><stop offset="0.8" stop-color="#5757ff"/><stop offset="1" stop-color="#3333ff" stop-opacity="0.7"/></radialGradient><radialGradient id="rdb"><stop offset="0" stop-color="#1a1a1a"/><stop offset="0.3" stop-color="#333"/><stop offset="0.75" stop-color="#4b4bff"/><stop offset="1" stop-color="#3f3fff" stop-opacity="0.6"/></radialGradient><linearGradient id="hg" x1="0" y1="0" x2="1" y2="0"><stop offset="0" stop-color="#fff"/><stop offset="0.05" stop-color="#fff"/><stop offset="0.92" stop-color="#10e010"/><stop offset="1" stop-color="#10e010"/></linearGradient><linearGradient id="wg" x1="0" y1="0" x2="1" y2="0"><stop offset="0" stop-color="#fff"/><stop offset="0.38" stop-color="#fff"/><stop offset="0.95" stop-color="#10e010"/><stop offset="1" stop-color="#10e010"/></linearGradient><linearGradient id="vg" x1="0" y1="0" x2="0" y2="1"><stop offset="0" stop-color="#10e010"/><stop offset="0.5" stop-color="#10e010" stop-opacity="0.45"/><stop offset="0.95" stop-color="#10e010" stop-opacity="0"/></linearGradient><radialGradient id="rlg"><stop offset="0" stop-color="#fff"/><stop offset="0.3" stop-color="#fff"/><stop offset="0.8" stop-color="#57e957"/><stop offset="1" stop-color="#33e433" stop-opacity="0.7"/></radialGradient><radialGradient id="rdg"><stop offset="0" stop-color="#1a1a1a"/><stop offset="0.3" stop-color="#333"/><stop offset="0.75" stop-color="#4be74b"/><stop offset="1" stop-color="#3fe63f" stop-opacity="0.6"/></radialGradient><linearGradient id="hr" x1="0" y1="0" x2="1" y2="0"><stop offset="0" stop-color="#fff"/><stop offset="0.05" stop-color="#fff"/><stop offset="0.92" stop-color="#ff1010"/><stop offset="1" stop-color="#ff1010"/></linearGradient><linearGradient id="wr" x1="0" y1="0" x2="1" y2="0"><stop offset="0" stop-color="#fff"/><stop offset="0.38" stop-color="#fff"/><stop offset="0.95" stop-color="#ff1010"/><stop offset="1" stop-color="#ff1010"/></linearGradient><linearGradient id="vr" x1="0" y1="0" x2="0" y2="1"><stop offset="0" stop-color="#ff1010"/><stop offset="0.5" stop-color="#ff1010" stop-opacity="0.45"/><stop offset="0.95" stop-color="#ff1010" stop-opacity="0"/></linearGradient><radialGradient id="rlr"><stop offset="0" stop-color="#fff"/><stop offset="0.3" stop-color="#fff"/><stop offset="0.8" stop-color="#ff5757"/><stop offset="1" stop-color="#ff3333" stop-opacity="0.7"/></radialGradient><radialGradient id="rdr"><stop offset="0" stop-color="#1a1a1a"/><stop offset="0.3" stop-color="#333"/><stop offset="0.75" stop-color="#ff4b4b"/><stop offset="1" stop-color="#ff3f3f" stop-opacity="0.6"/></radialGradient><linearGradient id="hy" x1="0" y1="0" x2="1" y2="0"><stop offset="0" stop-color="#fff"/><stop offset="0.05" stop-color="#fff"/><stop offset="0.92" stop-color="#ffee00"/><stop offset="1" stop-color="#ffee00"/></linearGradient><linearGradient id="wy" x1="0" y1="0" x2="1" y2="0"><stop offset="0" stop-color="#fff"/><stop offset="0.38" stop-color="#fff"/><stop offset="0.95" stop-color="#ffee00"/><stop offset="1" stop-color="#ffee00"/></linearGradient><linearGradient id="vy" x1="0" y1="0" x2="0" y2="1"><stop offset="0" stop-color="#ffee00"/><stop offset="0.5" stop-color="#ffee00" stop-opacity="0.45"/><stop offset="0.95" stop-color="#ffee00" stop-opacity="0"/></linearGradient><radialGradient id="rly"><stop offset="0" stop-color="#fff"/><stop offset="0.3" stop-color="#fff"/><stop offset="0.8" stop-color="#fff34c"/><stop offset="1" stop-color="#fff026" stop-opacity="0.7"/></radialGradient><radialGradient id="rdy"><stop offset="0" stop-color="#1a1a1a"/><stop offset="0.3" stop-color="#333"/><stop offset="0.75" stop-color="#fff23f"/><stop offset="1" stop-color="#fff133" stop-opacity="0.6"/></radialGradient><linearGradient id="hm" x1="0" y1="0" x2="1" y2="0"><stop offset="0" stop-color="#fff"/><stop offset="0.05" stop-color="#fff"/><stop offset="0.92" stop-color="#ff10ff"/><stop offset="1" stop-color="#ff10ff"/></linearGradient><linearGradient id="wm" x1="0" y1="0" x2="1" y2="0"><stop offset="0" stop-color="#fff"/><stop offset="0.38" stop-color="#fff"/><stop offset="0.95" stop-color="#ff10ff"/><stop offset="1" stop-color="#ff10ff"/></linearGradient><linearGradient id="vm" x1="0" y1="0" x2="0" y2="1"><stop offset="0" stop-color="#ff10ff"/><stop offset="0.5" stop-color="#ff10ff" stop-opacity="0.45"/><stop offset="0.95" stop-color="#ff10ff" stop-opacity="0"/></linearGradient><radialGradient id="rlm"><stop offset="0" stop-color="#fff"/><stop offset="0.3" stop-color="#fff"/><stop offset="0.8" stop-color="#ff57ff"/><stop offset="1" stop-color="#ff33ff" stop-opacity="0.7"/></radialGradient><radialGradient id="rdm"><stop offset="0" stop-color="#1a1a1a"/><stop offset="0.3" stop-color="#333"/><stop offset="0.75" stop-color="#ff4bff"/><stop offset="1" stop-color="#ff3fff" stop-opacity="0.6"/></radialGradient><linearGradient id="hc" x1="0" y1="0" x2="1" y2="0"><stop offset="0" stop-color="#fff"/><stop offset="0.05" stop-color="#fff"/><stop offset="0.92" stop-color="#10e8ff"/><stop offset="1" stop-color="#10e8ff"/></linearGradient><linearGradient id="wc" x1="0" y1="0" x2="1" y2="0"><stop offset="0" stop-color="#fff"/><stop offset="0.38" stop-color="#fff"/><stop offset="0.95" stop-color="#10e8ff"/><stop offset="1" stop-color="#10e8ff"/></linearGradient><linearGradient id="vc" x1="0" y1="0" x2="0" y2="1"><stop offset="0" stop-color="#10e8ff"/><stop offset="0.5" stop-color="#10e8ff" stop-opacity="0.45"/><stop offset="0.95" stop-color="#10e8ff" stop-opacity="0"/></linearGradient><radialGradient id="rlc"><stop offset="0" stop-color="#fff"/><stop offset="0.3" stop-color="#fff"/><stop offset="0.8" stop-color="#57eeff"/><stop offset="1" stop-color="#33ebff" stop-opacity="0.7"/></radialGradient><radialGradient id="rdc"><stop offset="0" stop-color="#1a1a1a"/><stop offset="0.3" stop-color="#333"/><stop offset="0.75" stop-color="#4bedff"/><stop offset="1" stop-color="#3fecff" stop-opacity="0.6"/></radialGradient><linearGradient id="ho" x1="0" y1="0" x2="1" y2="0"><stop offset="0" stop-color="#fff"/><stop offset="0.05" stop-color="#fff"/><stop offset="0.92" stop-color="#ff8c10"/><stop offset="1" stop-color="#ff8c10"/></linearGradient><linearGradient id="wo" x1="0" y1="0" x2="1" y2="0"><stop offset="0" stop-color="#fff"/><stop offset="0.38" stop-color="#fff"/><stop offset="0.95" stop-color="#ff8c10"/><stop offset="1" stop-color="#ff8c10"/></linearGradient><linearGradient id="vo" x1="0" y1="0" x2="0" y2="1"><stop offset="0" stop-color="#ff8c10"/><stop offset="0.5" stop-color="#ff8c10" stop-opacity="0.45"/><stop offset="0.95" stop-color="#ff8c10" stop-opacity="0"/></linearGradient><radialGradient id="rlo"><stop offset="0" stop-color="#fff"/><stop offset="0.3" stop-color="#fff"/><stop offset="0.8" stop-color="#ffae57"/><stop offset="1" stop-color="#ff9d33" stop-opacity="0.7"/></radialGradient><radialGradient id="rdo"><stop offset="0" stop-color="#1a1a1a"/><stop offset="0.3" stop-color="#333"/><stop offset="0.75" stop-color="#ffa84b"/><stop offset="1" stop-color="#ffa33f" stop-opacity="0.6"/></radialGradient><radialGradient id="rlgray"><stop offset="0" stop-color="#fff"/><stop offset="0.4" stop-color="#eee"/><stop offset="1" stop-color="#555"/></radialGradient><radialGradient id="rdgray"><stop offset="0" stop-color="#111"/><stop offset="0.4" stop-color="#333"/><stop offset="1" stop-color="#999"/></radialGradient><linearGradient id="qgc" x1="0" y1="0" x2="1" y2="0"><stop offset="0" stop-color="#22e022"/><stop offset="1" stop-color="#00e0ff"/></linearGradient><linearGradient id="qgy" x1="0" y1="0" x2="1" y2="0"><stop offset="0" stop-color="#50e000"/><stop offset="1" stop-color="#ffff00"/></linearGradient><linearGradient id="qry" x1="0" y1="0" x2="1" y2="0"><stop offset="0" stop-color="#ff1010"/><stop offset="1" stop-color="#ffee00"/></linearGradient><linearGradient id="qrm" x1="0" y1="0" x2="1" y2="0"><stop offset="0" stop-color="#ff0030"/><stop offset="1" stop-color="#ff10ff"/></linearGradient><linearGradient id="qbm" x1="0" y1="0" x2="1" y2="0"><stop offset="0" stop-color="#1010ff"/><stop offset="1" stop-color="#ff10ff"/></linearGradient><linearGradient id="qbc" x1="0" y1="0" x2="1" y2="0"><stop offset="0" stop-color="#1020ff"/><stop offset="1" stop-color="#00e8ff"/></linearGradient></defs><rect x="328.4" y="192" width="274.8" height="182" fill="#fff"/><line x1="328.5" y1="192" x2="328.5" y2="374" stroke="#999" stroke-width="0.5" /><line x1="603.2" y1="192" x2="603.2" y2="374" stroke="#ccc" stroke-width="0.5" /><circle cx="338.3" cy="204.6" r="8" fill="#cfcfcf"/><circle cx="338.3" cy="204.6" r="5.4" fill="#e4e4e4"/><path d="M334.6 206.5C336 201 341 201.4 341.6 204.6C339.6 203.2 337.4 204.2 338.4 207.4Z" fill="#bdbdbd"/><line x1="348.6" y1="193" x2="348.6" y2="214" stroke="#bbb" stroke-width="0.4" /><line x1="394.3" y1="193" x2="394.3" y2="214" stroke="#bbb" stroke-width="0.4" /><g transform="rotate(180 372 204.2)"><text x="372" y="206.4" font-size="9.6" font-weight="bold" font-style="italic" fill="#17a4e3" text-anchor="middle" textLength="41" lengthAdjust="spacingAndGlyphs">Hosonsoft</text><text x="372" y="213.4" font-size="5" font-weight="bold" fill="#17a4e3" text-anchor="middle" font-family="Liberation Sans,Noto Sans CJK SC,sans-serif">汉森软件</text></g><text x="430" y="199.6" font-size="3.7" font-weight="bold" fill="#5a5a5a" text-anchor="middle" transform="rotate(180 430 198.4)">15%</text><text x="430" y="203.1" font-size="3.7" font-weight="bold" fill="#5a5a5a" text-anchor="middle" transform="rotate(180 430 201.9)">30%</text><text x="430" y="206.6" font-size="3.7" font-weight="bold" fill="#5a5a5a" text-anchor="middle" transform="rotate(180 430 205.4)">45%</text><text x="430" y="210.1" font-size="3.7" font-weight="bold" fill="#5a5a5a" text-anchor="middle" transform="rotate(180 430 208.9)">60%</text><text x="430" y="213.6" font-size="3.7" font-weight="bold" fill="#5a5a5a" text-anchor="middle" transform="rotate(180 430 212.4)">75%</text><text x="470" y="199.6" font-size="3.7" font-weight="bold" fill="#5a5a5a" text-anchor="middle" transform="rotate(180 470 198.4)">100%</text><text x="470" y="203.1" font-size="3.7" font-weight="bold" fill="#5a5a5a" text-anchor="middle" transform="rotate(180 470 201.9)">95%</text><text x="470" y="206.6" font-size="3.7" font-weight="bold" fill="#5a5a5a" text-anchor="middle" transform="rotate(180 470 205.4)">90%</text><text x="470" y="210.1" font-size="3.7" font-weight="bold" fill="#5a5a5a" text-anchor="middle" transform="rotate(180 470 208.9)">85%</text><text x="470" y="213.6" font-size="3.7" font-weight="bold" fill="#5a5a5a" text-anchor="middle" transform="rotate(180 470 212.4)">80%</text><text x="510" y="199.6" font-size="3.7" font-weight="bold" fill="#5a5a5a" text-anchor="middle" transform="rotate(180 510 198.4)">1200</text><text x="510" y="203.1" font-size="3.7" font-weight="bold" fill="#5a5a5a" text-anchor="middle" transform="rotate(180 510 201.9)">1080</text><text x="510" y="206.6" font-size="3.7" font-weight="bold" fill="#5a5a5a" text-anchor="middle" transform="rotate(180 510 205.4)">960</text><text x="510" y="210.1" font-size="3.7" font-weight="bold" fill="#5a5a5a" text-anchor="middle" transform="rotate(180 510 208.9)">720</text><text x="510" y="213.6" font-size="3.7" font-weight="bold" fill="#5a5a5a" text-anchor="middle" transform="rotate(180 510 212.4)">600</text><text x="551.7" y="199.6" font-size="3.7" font-weight="bold" fill="#5a5a5a" text-anchor="middle" transform="rotate(180 551.7 198.4)">6 - 2</text><text x="551.7" y="203.1" font-size="3.7" font-weight="bold" fill="#5a5a5a" text-anchor="middle" transform="rotate(180 551.7 201.9)">4 - 2</text><text x="551.7" y="206.6" font-size="3.7" font-weight="bold" fill="#5a5a5a" text-anchor="middle" transform="rotate(180 551.7 205.4)">3 - 1</text><text x="551.7" y="210.1" font-size="3.7" font-weight="bold" fill="#5a5a5a" text-anchor="middle" transform="rotate(180 551.7 208.9)">2 - 1</text><text x="551.7" y="213.6" font-size="3.7" font-weight="bold" fill="#5a5a5a" text-anchor="middle" transform="rotate(180 551.7 212.4)">1 - 1</text><text x="591.5" y="199.6" font-size="3.7" font-weight="bold" fill="#5a5a5a" text-anchor="middle" transform="rotate(180 591.5 198.4)">100%</text><text x="591.5" y="203.1" font-size="3.7" font-weight="bold" fill="#5a5a5a" text-anchor="middle" transform="rotate(180 591.5 201.9)">95%</text><text x="591.5" y="206.6" font-size="3.7" font-weight="bold" fill="#5a5a5a" text-anchor="middle" transform="rotate(180 591.5 205.4)">90%</text><text x="591.5" y="210.1" font-size="3.7" font-weight="bold" fill="#5a5a5a" text-anchor="middle" transform="rotate(180 591.5 208.9)">85%</text><text x="591.5" y="213.6" font-size="3.7" font-weight="bold" fill="#5a5a5a" text-anchor="middle" transform="rotate(180 591.5 212.4)">80%</text><line x1="328.4" y1="214.8" x2="603" y2="214.8" stroke="#333" stroke-width="0.9" /><rect x="331.2" y="218" width="4.4" height="6.1" fill="#000"/><rect x="332.7" y="218" width="1.2" height="3.4" fill="#fff" opacity="0.55"/><rect x="331.2" y="224.1" width="4.4" height="2" fill="#ff10e0"/><rect x="331.8" y="227.3" width="3.2" height="2.5" fill="#10e0ff"/><rect x="338" y="218" width="4.4" height="6.1" fill="#000"/><rect x="339.5" y="218" width="1.2" height="3.4" fill="#fff" opacity="0.55"/><rect x="338" y="224.1" width="4.4" height="2" fill="#ff10e0"/><rect x="338.6" y="227.3" width="3.2" height="2.5" fill="#10e0ff"/><rect x="344.8" y="218" width="4.4" height="6.1" fill="#000"/><rect x="346.3" y="218" width="1.2" height="3.4" fill="#fff" opacity="0.55"/><rect x="344.8" y="224.1" width="4.4" height="2" fill="#ff10e0"/><rect x="345.4" y="227.3" width="3.2" height="2.5" fill="#10e0ff"/><rect x="351.6" y="218" width="4.4" height="6.1" fill="#000"/><rect x="353.1" y="218" width="1.2" height="3.4" fill="#fff" opacity="0.55"/><rect x="351.6" y="224.1" width="4.4" height="2" fill="#ff10e0"/><rect x="352.2" y="227.3" width="3.2" height="2.5" fill="#10e0ff"/><rect x="358.4" y="218" width="4.4" height="6.1" fill="#000"/><rect x="359.9" y="218" width="1.2" height="3.4" fill="#fff" opacity="0.55"/><rect x="358.4" y="224.1" width="4.4" height="2" fill="#ff10e0"/><rect x="359" y="227.3" width="3.2" height="2.5" fill="#10e0ff"/><rect x="345.7" y="231" width="16.3" height="2.75" fill="#1010f0"/><rect x="341.5" y="231" width="4.2" height="2.75" fill="#1010f0" opacity="0.25"/><rect x="345.7" y="233.7" width="16.3" height="1.05" fill="#10c010"/><rect x="341.5" y="233.7" width="4.2" height="1.05" fill="#10c010" opacity="0.25"/><rect x="345.7" y="234.7" width="16.3" height="1.65" fill="#e81010"/><rect x="341.5" y="234.7" width="4.2" height="1.65" fill="#e81010" opacity="0.25"/><rect x="345.7" y="236.3" width="16.3" height="3.25" fill="#000"/><rect x="341.5" y="236.3" width="4.2" height="3.25" fill="#000" opacity="0.25"/><rect x="345.7" y="239.5" width="16.3" height="2.85" fill="#ffee00"/><rect x="341.5" y="239.5" width="4.2" height="2.85" fill="#ffee00" opacity="0.25"/><rect x="345.7" y="242.3" width="16.3" height="1.05" fill="#ff10ff"/><rect x="341.5" y="242.3" width="4.2" height="1.05" fill="#ff10ff" opacity="0.25"/><rect x="345.7" y="243.3" width="16.3" height="1.15" fill="#10e0ff"/><rect x="341.5" y="243.3" width="4.2" height="1.15" fill="#10e0ff" opacity="0.25"/><rect x="364.6" y="218.1" width="34.8" height="1.97" fill="url(#hb)"/><rect x="364.6" y="220.02" width="34.8" height="1.97" fill="url(#hg)"/><rect x="364.6" y="221.94" width="34.8" height="1.97" fill="url(#hr)"/><rect x="364.6" y="223.86" width="34.8" height="1.97" fill="url(#hy)"/><rect x="364.6" y="225.79" width="34.8" height="1.97" fill="url(#hm)"/><rect x="364.6" y="227.71" width="34.8" height="1.97" fill="url(#hc)"/><rect x="364.6" y="229.63" width="34.8" height="1.97" fill="url(#hk)"/><rect x="364.6" y="231.55" width="34.8" height="1.97" fill="url(#hk)"/><rect x="364.6" y="233.47" width="34.8" height="1.97" fill="url(#hg)"/><rect x="364.6" y="235.39" width="34.8" height="1.97" fill="url(#hb)"/><rect x="364.6" y="237.31" width="34.8" height="1.97" fill="url(#hr)"/><rect x="364.6" y="239.24" width="34.8" height="1.97" fill="url(#hy)"/><rect x="364.6" y="241.16" width="34.8" height="1.97" fill="url(#hm)"/><rect x="364.6" y="243.08" width="34.8" height="1.97" fill="url(#hc)"/><rect x="403.2" y="218" width="7.7" height="7.6" fill="#3c3c3c"/><ellipse cx="407.05" cy="221.8" rx="2.4" ry="1.6" fill="#fff" transform="rotate(-35 407.05 221.8)" opacity="0.55"/><rect x="413.5" y="218" width="8.2" height="7.6" fill="#555"/><ellipse cx="417.6" cy="221.8" rx="2.4" ry="1.6" fill="#fff" transform="rotate(-35 417.6 221.8)" opacity="0.55"/><rect x="423.7" y="218" width="8.1" height="7.6" fill="#444"/><ellipse cx="427.75" cy="221.8" rx="2.4" ry="1.6" fill="#fff" transform="rotate(-35 427.75 221.8)" opacity="0.55"/><rect x="403.2" y="227" width="7.7" height="7.6" fill="#4a4af0"/><ellipse cx="407.05" cy="230.8" rx="2.4" ry="1.6" fill="#fff" transform="rotate(-35 407.05 230.8)" opacity="0.55"/><rect x="413.5" y="227" width="8.2" height="7.6" fill="#40dc40"/><ellipse cx="417.6" cy="230.8" rx="2.4" ry="1.6" fill="#fff" transform="rotate(-35 417.6 230.8)" opacity="0.55"/><rect x="423.7" y="227" width="8.1" height="7.6" fill="#f04040"/><ellipse cx="427.75" cy="230.8" rx="2.4" ry="1.6" fill="#fff" transform="rotate(-35 427.75 230.8)" opacity="0.55"/><rect x="403.2" y="236" width="7.7" height="9.2" fill="#fff040"/><ellipse cx="407.05" cy="240.6" rx="2.4" ry="1.6" fill="#fff" transform="rotate(-35 407.05 240.6)" opacity="0.55"/><rect x="413.5" y="236" width="8.2" height="9.2" fill="#f860f0"/><ellipse cx="417.6" cy="240.6" rx="2.4" ry="1.6" fill="#fff" transform="rotate(-35 417.6 240.6)" opacity="0.55"/><rect x="423.7" y="236" width="8.1" height="9.2" fill="#50e4f8"/><ellipse cx="427.75" cy="240.6" rx="2.4" ry="1.6" fill="#fff" transform="rotate(-35 427.75 240.6)" opacity="0.55"/><rect x="433.6" y="218" width="19.1" height="7.6" fill="#141414"/><polygon points="439.33,224.69 443.15,221.8 451.17,219.37 451.75,224.69" fill="#fff" opacity="0.8"/><rect x="433.6" y="227" width="19.1" height="7.6" fill="#141414"/><polygon points="439.33,233.69 443.15,230.8 451.17,228.37 451.75,233.69" fill="#fff" opacity="0.8"/><rect x="452.7" y="218" width="19.3" height="7.6" fill="#1a1af0"/><polygon points="458.49,224.69 462.35,221.8 470.46,219.37 471.04,224.69" fill="#fff" opacity="0.8"/><rect x="452.7" y="227" width="19.3" height="7.6" fill="#ff14f0"/><polygon points="458.49,233.69 462.35,230.8 470.46,228.37 471.04,233.69" fill="#fff" opacity="0.8"/><rect x="472" y="218" width="19.6" height="7.6" fill="#10e010"/><polygon points="477.88,224.69 481.8,221.8 490.03,219.37 490.62,224.69" fill="#fff" opacity="0.8"/><rect x="472" y="227" width="19.6" height="7.6" fill="#10e8ff"/><polygon points="477.88,233.69 481.8,230.8 490.03,228.37 490.62,233.69" fill="#fff" opacity="0.8"/><rect x="491.6" y="218" width="19.1" height="7.6" fill="#f01414"/><polygon points="497.33,224.69 501.15,221.8 509.17,219.37 509.75,224.69" fill="#fff" opacity="0.8"/><rect x="491.6" y="227" width="19.1" height="7.6" fill="#141414"/><polygon points="497.33,233.69 501.15,230.8 509.17,228.37 509.75,233.69" fill="#fff" opacity="0.8"/><rect x="521.6" y="218" width="17.8" height="7.6" fill="#fff"/><polygon points="521.96,225.22 526.94,222.18 532.64,220.28 538.51,218.15 539.04,224.99" fill="#444" opacity="0.62"/><polygon points="526.94,224.84 532.28,221.8 537.98,219.9 538.33,224.84" fill="#444" opacity="0.5"/><rect x="521.6" y="227" width="17.8" height="7.6" fill="#fff"/><polygon points="521.96,234.22 526.94,231.18 532.64,229.28 538.51,227.15 539.04,233.99" fill="#888" opacity="0.62"/><polygon points="526.94,233.84 532.28,230.8 537.98,228.9 538.33,233.84" fill="#888" opacity="0.5"/><rect x="542" y="218" width="17.8" height="7.6" fill="#fff"/><polygon points="542.36,225.22 547.34,222.18 553.04,220.28 558.91,218.15 559.44,224.99" fill="#5a5aff" opacity="0.62"/><polygon points="547.34,224.84 552.68,221.8 558.38,219.9 558.73,224.84" fill="#5a5aff" opacity="0.5"/><rect x="542" y="227" width="17.8" height="7.6" fill="#fff"/><polygon points="542.36,234.22 547.34,231.18 553.04,229.28 558.91,227.15 559.44,233.99" fill="#ff60ff" opacity="0.62"/><polygon points="547.34,233.84 552.68,230.8 558.38,228.9 558.73,233.84" fill="#ff60ff" opacity="0.5"/><rect x="562.4" y="218" width="16.4" height="7.6" fill="#fff"/><polygon points="562.73,225.22 567.32,222.18 572.57,220.28 577.98,218.15 578.47,224.99" fill="#40e040" opacity="0.62"/><polygon points="567.32,224.84 572.24,221.8 577.49,219.9 577.82,224.84" fill="#40e040" opacity="0.5"/><rect x="562.4" y="227" width="16.4" height="7.6" fill="#fff"/><polygon points="562.73,234.22 567.32,231.18 572.57,229.28 577.98,227.15 578.47,233.99" fill="#50e8ff" opacity="0.62"/><polygon points="567.32,233.84 572.24,230.8 577.49,228.9 577.82,233.84" fill="#50e8ff" opacity="0.5"/><rect x="581" y="218" width="16.8" height="7.6" fill="#fff"/><polygon points="581.34,225.22 586.04,222.18 591.42,220.28 596.96,218.15 597.46,224.99" fill="#ff4a4a" opacity="0.62"/><polygon points="586.04,224.84 591.08,221.8 596.46,219.9 596.79,224.84" fill="#ff4a4a" opacity="0.5"/><rect x="581" y="227" width="16.8" height="7.6" fill="#fff"/><polygon points="581.34,234.22 586.04,231.18 591.42,229.28 596.96,227.15 597.46,233.99" fill="#777" opacity="0.62"/><polygon points="586.04,233.84 591.08,230.8 596.46,228.9 596.79,233.84" fill="#777" opacity="0.5"/><circle cx="438.5" cy="240.6" r="4.7" fill="url(#rlb)"/><circle cx="448.83" cy="240.6" r="4.7" fill="url(#rlg)"/><circle cx="459.16" cy="240.6" r="4.7" fill="url(#rlr)"/><circle cx="469.49" cy="240.6" r="4.7" fill="url(#rly)"/><circle cx="479.82" cy="240.6" r="4.7" fill="url(#rlm)"/><circle cx="490.15" cy="240.6" r="4.7" fill="url(#rlc)"/><circle cx="500.48" cy="240.6" r="4.7" fill="url(#rlgray)"/><circle cx="510.81" cy="240.6" r="4.7" fill="url(#rdgray)"/><circle cx="521.14" cy="240.6" r="4.7" fill="url(#rdgray)"/><circle cx="531.47" cy="240.6" r="4.7" fill="url(#rdb)"/><circle cx="541.8" cy="240.6" r="4.7" fill="url(#rdg)"/><circle cx="552.13" cy="240.6" r="4.7" fill="url(#rdr)"/><circle cx="562.46" cy="240.6" r="4.7" fill="url(#rdy)"/><circle cx="572.79" cy="240.6" r="4.7" fill="url(#rdm)"/><circle cx="583.12" cy="240.6" r="4.7" fill="url(#rdc)"/><circle cx="593.45" cy="240.6" r="4.7" fill="url(#rdgray)"/><rect x="330.2" y="251" width="2.5" height="104" fill="url(#vk)"/><rect x="332.9" y="251" width="2.5" height="104" fill="url(#vb)"/><rect x="335.6" y="251" width="2.5" height="104" fill="url(#vg)"/><rect x="338.3" y="251" width="2.5" height="104" fill="url(#vr)"/><rect x="341" y="251" width="2.5" height="104" fill="url(#vy)"/><rect x="343.7" y="251" width="2.5" height="104" fill="url(#vm)"/><rect x="346.4" y="251" width="2.5" height="104" fill="url(#vc)"/><g filter="url(#bl)"><polygon points="339,371.2 333.47,363.6 338.2,361.83" fill="#ff0000"/><polygon points="339,371.2 338.01,361.85 342.99,362.69" fill="#ff7f00"/><polygon points="339,371.2 342.82,362.61 346.71,365.82" fill="#ffff00"/><polygon points="339,371.2 346.6,365.67 348.37,370.4" fill="#7fff00"/><polygon points="339,371.2 348.35,370.21 347.51,375.19" fill="#00ff00"/><polygon points="339,371.2 347.59,375.02 344.38,378.91" fill="#00ff7f"/><polygon points="339,371.2 344.53,378.8 339.8,380.57" fill="#00ffff"/><polygon points="339,371.2 339.99,380.55 335.01,379.71" fill="#007fff"/><polygon points="339,371.2 335.18,379.79 331.29,376.58" fill="#0000ff"/><polygon points="339,371.2 331.4,376.73 329.63,372" fill="#7f00ff"/><polygon points="339,371.2 329.65,372.19 330.49,367.21" fill="#ff00ff"/><polygon points="339,371.2 330.41,367.38 333.62,363.49" fill="#ff007f"/><circle cx="339" cy="371.2" r="3" fill="#222"/></g><clipPath id="cp1"><rect x="350.4" y="249" width="37.4" height="28.2"/></clipPath><g clip-path="url(#cp1)"><rect x="349.4" y="248" width="39.4" height="30.2" fill="#7f9c98"/><g filter="url(#bl)"><ellipse cx="355" cy="253" rx="6" ry="5" fill="#e83050"/><ellipse cx="364" cy="252" rx="7" ry="4.5" fill="#f2e040"/><ellipse cx="375" cy="254" rx="6" ry="5" fill="#7ac030"/><ellipse cx="383" cy="255" rx="6" ry="6" fill="#2058d8"/><ellipse cx="352" cy="258" rx="3" ry="4" fill="#30a8e0"/><ellipse cx="384" cy="264" rx="4" ry="5" fill="#e82038"/><ellipse cx="365" cy="262" rx="13" ry="4.2" fill="#f0ebe0"/><ellipse cx="360" cy="266" rx="6" ry="3" fill="#d8cdb8"/><ellipse cx="374" cy="266" rx="7" ry="2.6" fill="#e8e0d0"/><rect x="350" y="271" width="38" height="7" fill="#6f8f8c"/></g></g><clipPath id="cp2"><rect x="350.4" y="278.6" width="37.4" height="28"/></clipPath><g clip-path="url(#cp2)"><rect x="349.4" y="277.6" width="39.4" height="30" fill="#9c7d60"/><g filter="url(#bl)"><rect x="350" y="278" width="38" height="4" fill="#c8b8a0"/><ellipse cx="362" cy="290" rx="10" ry="9" fill="#c8ea3a"/><ellipse cx="377" cy="291" rx="9" ry="9" fill="#8cc828"/><ellipse cx="369" cy="298" rx="10" ry="6" fill="#b0e030"/><ellipse cx="358" cy="284" rx="6" ry="4" fill="#e0f080"/><ellipse cx="380" cy="284" rx="5" ry="4" fill="#5a9a20"/><rect x="350" y="302" width="38" height="5" fill="#8a6a50"/></g></g><clipPath id="cp3"><rect x="350.4" y="307.5" width="37.4" height="26.5"/></clipPath><g clip-path="url(#cp3)"><rect x="349.4" y="306.5" width="39.4" height="28.5" fill="#d9b070"/><g filter="url(#bl)"><rect x="350" y="307" width="38" height="4" fill="#e8d8c0"/><ellipse cx="358" cy="320" rx="7" ry="6" fill="#e8a020"/><ellipse cx="372" cy="322" rx="8" ry="7" fill="#e09018"/><ellipse cx="366" cy="317" rx="5" ry="5" fill="#806040"/><ellipse cx="381" cy="316" rx="5" ry="4" fill="#f0e0c8"/><ellipse cx="364" cy="327" rx="5" ry="3" fill="#f4ead8"/><rect x="350" y="330.5" width="38" height="4" fill="#ead8c0"/></g></g><clipPath id="cp4"><rect x="350.4" y="336" width="37.4" height="38"/></clipPath><g clip-path="url(#cp4)"><rect x="349.4" y="335" width="39.4" height="40" fill="#888"/><g filter="url(#bl)"><polygon points="369,359.5 429,359.5 426.63,376.19" fill="#f48413"/><polygon points="369,359.5 426.96,375.03 420.35,390.53" fill="#f4bc13"/><polygon points="369,359.5 420.96,389.5 410.57,402.77" fill="#f4f413"/><polygon points="369,359.5 411.43,401.93 397.95,412.05" fill="#bcf413"/><polygon points="369,359.5 399,411.46 383.37,417.75" fill="#84f413"/><polygon points="369,359.5 384.53,417.46 367.8,419.49" fill="#4bf413"/><polygon points="369,359.5 369,419.5 352.31,417.13" fill="#13f413"/><polygon points="369,359.5 353.47,417.46 337.97,410.85" fill="#13f44b"/><polygon points="369,359.5 339,411.46 325.73,401.07" fill="#13f484"/><polygon points="369,359.5 326.57,401.93 316.45,388.45" fill="#13f4bc"/><polygon points="369,359.5 317.04,389.5 310.75,373.87" fill="#13f4f4"/><polygon points="369,359.5 311.04,375.03 309.01,358.3" fill="#13bcf4"/><polygon points="369,359.5 309,359.5 311.37,342.81" fill="#1384f4"/><polygon points="369,359.5 311.04,343.97 317.65,328.47" fill="#134bf4"/><polygon points="369,359.5 317.04,329.5 327.43,316.23" fill="#1313f4"/><polygon points="369,359.5 326.57,317.07 340.05,306.95" fill="#4b13f4"/><polygon points="369,359.5 339,307.54 354.63,301.25" fill="#8413f4"/><polygon points="369,359.5 353.47,301.54 370.2,299.51" fill="#bc13f4"/><polygon points="369,359.5 369,299.5 385.69,301.87" fill="#f413f4"/><polygon points="369,359.5 384.53,301.54 400.03,308.15" fill="#f413bc"/><polygon points="369,359.5 399,307.54 412.27,317.93" fill="#f41384"/><polygon points="369,359.5 411.43,317.07 421.55,330.55" fill="#f4134b"/><polygon points="369,359.5 420.96,329.5 427.25,345.13" fill="#f41313"/><polygon points="369,359.5 426.96,343.97 428.99,360.7" fill="#f44b13"/></g></g><clipPath id="cp5"><rect x="388.7" y="249" width="57" height="34.3"/></clipPath><g clip-path="url(#cp5)"><rect x="387.7" y="248" width="59" height="36.3" fill="#2b333a"/><g filter="url(#bl)"><ellipse cx="405" cy="262" rx="9" ry="7" fill="#e8e8e8"/><ellipse cx="418" cy="266" rx="11" ry="8" fill="#f2f2f2"/><ellipse cx="428" cy="258" rx="8" ry="7" fill="#dcdcdc"/><ellipse cx="412" cy="271" rx="9" ry="5" fill="#c8c8c8"/><ellipse cx="432" cy="270" rx="7" ry="6" fill="#e4e4e4"/><ellipse cx="398" cy="268" rx="5" ry="4" fill="#aab0b4"/><rect x="440" y="249" width="6" height="35" fill="#6c7880"/><ellipse cx="395" cy="254" rx="5" ry="3" fill="#59636a"/></g></g><clipPath id="cp6"><rect x="446.8" y="249" width="46.4" height="34.5"/></clipPath><g clip-path="url(#cp6)"><rect x="445.8" y="248" width="48.4" height="36.5" fill="#dde2e8"/><g filter="url(#bl)"><rect x="470" y="249" width="24" height="35" fill="#eceff2"/><ellipse cx="458" cy="263" rx="12" ry="15" fill="#e2bfa8"/><ellipse cx="452" cy="279" rx="10" ry="7" fill="#7a5a48"/><ellipse cx="462" cy="282" rx="10" ry="4" fill="#5f4536"/><ellipse cx="462" cy="258" rx="3" ry="1.6" fill="#e07890"/><ellipse cx="466" cy="270" rx="2.4" ry="1.2" fill="#7a8a90"/><rect x="446" y="249" width="4" height="8" fill="#f0e8e0"/></g></g><clipPath id="cp7"><rect x="493.2" y="249" width="53.6" height="34.5"/></clipPath><g clip-path="url(#cp7)"><rect x="492.2" y="248" width="55.6" height="36.5" fill="#fbfbfb"/><g filter="url(#bl)"><g fill="none" stroke="#8e979c" stroke-width="1.1"><ellipse cx="514" cy="262" rx="12" ry="6"/><ellipse cx="528" cy="266" rx="9" ry="9"/><ellipse cx="519" cy="272" rx="10" ry="4"/><path d="M502 258h34M504 270h20"/></g><ellipse cx="520" cy="262" rx="9" ry="4" fill="#c8d0d4" opacity="0.6"/></g></g><clipPath id="cp8"><rect x="547.3" y="249" width="52.2" height="34.5"/></clipPath><g clip-path="url(#cp8)"><rect x="546.3" y="248" width="54.2" height="36.5" fill="#f4ebe6"/><g filter="url(#bl)"><rect x="546" y="248" width="19" height="37" fill="#3f8f22"/><rect x="551" y="248" width="2.4" height="37" fill="#2c6c16"/><rect x="558" y="248" width="2" height="37" fill="#56a830"/><rect x="563" y="248" width="4" height="37" fill="#6a9a40"/><ellipse cx="584" cy="266" rx="13" ry="15" fill="#f2d6c8"/><ellipse cx="592" cy="253" rx="9" ry="5" fill="#c8a488"/><ellipse cx="580" cy="258" rx="3.4" ry="1.6" fill="#e070a0"/><ellipse cx="577" cy="272" rx="2.6" ry="1.2" fill="#708090"/><ellipse cx="590" cy="273" rx="2.6" ry="1.2" fill="#708090"/><ellipse cx="596" cy="278" rx="5" ry="6" fill="#fff"/></g></g><clipPath id="cp9"><rect x="388.7" y="285.2" width="30.6" height="38.4"/></clipPath><g clip-path="url(#cp9)"><rect x="387.7" y="284.2" width="32.6" height="40.4" fill="#c4c4c4"/><g filter="url(#bl)"><rect x="388" y="285" width="32" height="6" fill="#4a4a4a"/><ellipse cx="404" cy="302" rx="10" ry="12" fill="#a8a8a8"/><ellipse cx="404" cy="298" rx="6" ry="5" fill="#d8d8d8"/><ellipse cx="396" cy="310" rx="5" ry="8" fill="#e4e4e4"/><ellipse cx="413" cy="312" rx="5" ry="8" fill="#dcdcdc"/><ellipse cx="404" cy="318" rx="9" ry="4" fill="#8c8c8c"/><ellipse cx="401" cy="293" rx="8" ry="3" fill="#777"/></g></g><clipPath id="cp10"><rect x="388.7" y="323.6" width="30.6" height="33.3"/></clipPath><g clip-path="url(#cp10)"><rect x="387.7" y="322.6" width="32.6" height="35.3" fill="#f8f8f8"/><g filter="url(#bl)"><g fill="none" stroke="#d4d8da" stroke-width="0.9"><path d="M396 330v20M404 328v24M412 331v18M394 340h20"/></g></g></g><clipPath id="cp11"><rect x="388.7" y="358" width="30.6" height="16"/></clipPath><g clip-path="url(#cp11)"><rect x="387.7" y="357" width="32.6" height="18" fill="#161616"/><g filter="url(#bl)"><ellipse cx="403" cy="367" rx="8" ry="4" fill="#b8ac98"/><ellipse cx="397" cy="366" rx="3" ry="3" fill="#e8e0d0"/><ellipse cx="412" cy="368" rx="4" ry="3" fill="#8a8070"/><rect x="388" y="358" width="32" height="3" fill="#2a2a2a"/></g></g><clipPath id="cp12"><rect x="420.6" y="285.4" width="45.2" height="29.6"/></clipPath><g clip-path="url(#cp12)"><rect x="419.6" y="284.4" width="47.2" height="31.6" fill="#18222c"/><g filter="url(#bl)"><ellipse cx="435" cy="299.6" rx="14.5" ry="14" fill="#8a949a"/><ellipse cx="435" cy="299.6" rx="12.4" ry="12" fill="#1c262e"/><ellipse cx="435" cy="299.6" rx="10" ry="9.6" fill="#6d777d"/><ellipse cx="435" cy="299.6" rx="7.4" ry="7" fill="#222c34"/><ellipse cx="435.5" cy="299.6" rx="4" ry="4.4" fill="#59636b"/><ellipse cx="436" cy="299" rx="1.6" ry="2.4" fill="#d0d4d8"/><polygon points="447,285 452.4,285 450,315 444.6,315" fill="#cdd3d7" opacity="0.85"/><rect x="453" y="285" width="13" height="30" fill="#121a22"/><polygon points="420,285 428,285 420,296" fill="#59626a" opacity="0.8"/></g></g><clipPath id="cp13"><rect x="420.6" y="315.7" width="45.2" height="58.3"/></clipPath><g clip-path="url(#cp13)"><rect x="419.6" y="314.7" width="47.2" height="60.3" fill="#b8c0a8"/><g filter="url(#bl)"><rect x="430" y="315" width="37" height="10" fill="#4a80d0"/><rect x="419" y="315" width="11.6" height="22" fill="#f0d010"/><ellipse cx="462" cy="330" rx="5" ry="6" fill="#e8c020"/><ellipse cx="433" cy="324" rx="5.4" ry="4.4" fill="#f0d4c4"/><polygon points="432.5,323.2 463.2,333.7 465.8,341.5 438.6,351.8 427.5,336" fill="#f26a2a"/><polygon points="435,326.6 458,334.6 440,346" fill="#f58244" opacity="0.9"/><rect x="419" y="337" width="10" height="16" fill="#9aa8b8"/><ellipse cx="426" cy="343" rx="4" ry="5" fill="#b890d8"/><ellipse cx="431" cy="350" rx="5" ry="3" fill="#e0d060"/><ellipse cx="452" cy="349.5" rx="8.4" ry="5" fill="#f060c0"/><ellipse cx="438" cy="352" rx="4" ry="3" fill="#c8d0d8"/><ellipse cx="447" cy="364" rx="9" ry="9" fill="#eec4b0"/><ellipse cx="446.6" cy="369" rx="3" ry="1.4" fill="#e04878"/><rect x="419" y="351" width="12" height="24" fill="#86d444"/><rect x="430.5" y="362" width="7.5" height="13" fill="#3090e0"/><rect x="457" y="354" width="10" height="21" fill="#3a8ae0"/><rect x="457" y="360" width="5" height="8" fill="#78d848"/><rect x="462" y="366" width="4" height="8" fill="#f0e040"/></g></g><clipPath id="cp14"><rect x="466.1" y="285.4" width="50.7" height="32.5"/></clipPath><g clip-path="url(#cp14)"><rect x="465.1" y="284.4" width="52.7" height="34.5" fill="#191919"/><g filter="url(#bl)"><polygon points="466,285 476,285 470,300 466,300" fill="#d8c8b8"/><ellipse cx="483.5" cy="301.6" rx="7.4" ry="6.4" fill="#e2aaa2"/><ellipse cx="481" cy="308.6" rx="4" ry="2.6" fill="#f0d8d0"/><ellipse cx="480" cy="296" rx="5" ry="3" fill="#c89088"/><polygon points="492,288 517,286 517,294 494,299" fill="#8c9499" opacity="0.85"/><polygon points="495,302 517,297 517,306 497,311" fill="#60686d" opacity="0.85"/><polygon points="498,313 517,309 517,318 500,318" fill="#3c4348" opacity="0.85"/><ellipse cx="473" cy="310" rx="6" ry="6" fill="#101010"/></g></g><clipPath id="cp15"><rect x="518" y="285.2" width="49.3" height="32.4"/></clipPath><g clip-path="url(#cp15)"><rect x="517" y="284.2" width="51.3" height="34.4" fill="#ad8230"/><g filter="url(#bl)"><line x1="524.2" y1="285" x2="527.2" y2="318" stroke="#2e2008" stroke-width="0.9" /><line x1="530.4" y1="285" x2="527.4" y2="318" stroke="#2e2008" stroke-width="0.9" /><line x1="536.6" y1="285" x2="539.6" y2="318" stroke="#2e2008" stroke-width="0.9" /><line x1="542.8" y1="285" x2="539.8" y2="318" stroke="#2e2008" stroke-width="0.9" /><line x1="549" y1="285" x2="552" y2="318" stroke="#2e2008" stroke-width="0.9" /><line x1="555.2" y1="285" x2="552.2" y2="318" stroke="#2e2008" stroke-width="0.9" /><line x1="561.4" y1="285" x2="564.4" y2="318" stroke="#2e2008" stroke-width="0.9" /><line x1="518" y1="290.6" x2="568" y2="292.6" stroke="#2e2008" stroke-width="0.9" /><line x1="518" y1="296.2" x2="568" y2="294.2" stroke="#2e2008" stroke-width="0.9" /><line x1="518" y1="301.8" x2="568" y2="303.8" stroke="#2e2008" stroke-width="0.9" /><line x1="518" y1="307.4" x2="568" y2="305.4" stroke="#2e2008" stroke-width="0.9" /><line x1="518" y1="313" x2="568" y2="315" stroke="#2e2008" stroke-width="0.9" /><ellipse cx="534" cy="291.5" rx="3.4" ry="2.6" fill="#f6e820"/><rect x="518" y="285" width="50" height="2" fill="#d8c8a0"/><ellipse cx="556" cy="312" rx="10" ry="4" fill="#8a6420"/></g></g><clipPath id="cp16"><rect x="568.2" y="285.2" width="31.8" height="49"/></clipPath><g clip-path="url(#cp16)"><rect x="567.2" y="284.2" width="33.8" height="51" fill="#dca650"/><g filter="url(#bl)"><rect x="568" y="285" width="33" height="4" fill="#e8d8b8"/><ellipse cx="586" cy="292" rx="9" ry="3.4" fill="#f4f0e8"/><ellipse cx="585" cy="298" rx="7" ry="3.4" fill="#86d81e"/><ellipse cx="576" cy="300" rx="5" ry="6" fill="#f0ece0"/><ellipse cx="578" cy="308" rx="5.6" ry="5.2" fill="#dc1a1a"/><ellipse cx="592" cy="303" rx="4" ry="4" fill="#e8e0c8"/><ellipse cx="596" cy="312" rx="5" ry="5" fill="#d81818"/><ellipse cx="588" cy="318" rx="5.4" ry="5" fill="#e02020"/><ellipse cx="580" cy="326" rx="5" ry="4.6" fill="#d81a1a"/><ellipse cx="594" cy="324" rx="4" ry="4" fill="#c81414"/><rect x="567" y="312" width="9" height="16" fill="#48b4cc"/><ellipse cx="574" cy="330" rx="6" ry="4" fill="#5cc0d8"/><rect x="590" y="328" width="11" height="7" fill="#e8962c"/><ellipse cx="586" cy="310" rx="3" ry="3" fill="#f8f0d8"/></g></g><clipPath id="cp17"><rect x="466.3" y="317.9" width="50.7" height="31.9"/></clipPath><g clip-path="url(#cp17)"><rect x="465.3" y="316.9" width="52.7" height="33.9" fill="#a8d848"/><g filter="url(#bl)"><rect x="466" y="317" width="9" height="33" fill="#b9a2e2"/><rect x="474.5" y="317" width="13" height="33" fill="#5a7aca"/><rect x="487" y="317" width="11" height="33" fill="#a6d648"/><rect x="497.5" y="317" width="11" height="33" fill="#f8e84a"/><rect x="508" y="317" width="10" height="33" fill="#ea4a92"/><ellipse cx="505" cy="322" rx="6" ry="4" fill="#f8c040"/><ellipse cx="480" cy="336" rx="5" ry="8" fill="#4868b8"/><ellipse cx="492" cy="330" rx="3" ry="6" fill="#c8e870"/><rect x="466" y="317.5" width="52" height="2.4" fill="#e8e0f0"/><ellipse cx="512" cy="340" rx="4" ry="7" fill="#e83080"/></g></g><clipPath id="cp18"><rect x="518" y="318.3" width="49.4" height="31.5"/></clipPath><g clip-path="url(#cp18)"><rect x="517" y="317.3" width="51.4" height="33.5" fill="#0e0e0e"/><g filter="url(#bl)"><ellipse cx="542" cy="331" rx="26" ry="19" fill="#8e8e8e"/><ellipse cx="542" cy="331" rx="22" ry="15.5" fill="#d2d2d2"/><ellipse cx="542" cy="329.5" rx="12" ry="9" fill="#9a9a9a"/><ellipse cx="542" cy="328.6" rx="7.4" ry="6.4" fill="#4a4a4a"/><ellipse cx="543" cy="328" rx="3.6" ry="3.2" fill="#202020"/><ellipse cx="540" cy="327" rx="1.6" ry="1.4" fill="#cfcfcf"/><polygon points="518,318 537,318 518,333" fill="#0a0a0a"/><polygon points="567.5,318 555,318 567.5,327" fill="#101010"/><polygon points="518,350 518,340 533,350" fill="#0c0c0c"/></g></g><clipPath id="cp19"><rect x="466.3" y="351" width="50.7" height="23"/></clipPath><g clip-path="url(#cp19)"><rect x="465.3" y="350" width="52.7" height="25" fill="#2b2b24"/><g filter="url(#bl)"><g fill="none" stroke="#c4c4b0" stroke-width="1.3"><circle cx="497" cy="366" r="7"/><circle cx="506" cy="368" r="4.4"/><circle cx="485" cy="369" r="5"/></g><rect x="478" y="353" width="26" height="2.4" fill="#d0d0c0"/><ellipse cx="474" cy="362" rx="5" ry="4" fill="#a89c30" opacity="0.8"/><ellipse cx="511" cy="358" rx="4" ry="3" fill="#9c9230" opacity="0.8"/></g></g><clipPath id="cp20"><rect x="518" y="351" width="49.3" height="23"/></clipPath><g clip-path="url(#cp20)"><rect x="517" y="350" width="51.3" height="25" fill="#e48a3a"/><g filter="url(#bl)"><rect x="517" y="350" width="51" height="4" fill="#b8ac48"/><rect x="517" y="354" width="51" height="3" fill="#e8a050"/><rect x="517" y="357.5" width="51" height="2.6" fill="#d8e0c0"/><rect x="517" y="360" width="51" height="4" fill="#e87828"/><rect x="517" y="364" width="51" height="2.4" fill="#f0d8b0"/><rect x="517" y="366.4" width="51" height="3.4" fill="#e08030"/><rect x="517" y="369.6" width="51" height="5" fill="#58bcdc"/><ellipse cx="530" cy="362" rx="4" ry="2" fill="#7cc0a0"/><ellipse cx="552" cy="358" rx="5" ry="2" fill="#f8f0e0"/></g></g><clipPath id="cp21"><rect x="568.2" y="335.2" width="31.8" height="38.8"/></clipPath><g clip-path="url(#cp21)"><rect x="567.2" y="334.2" width="33.8" height="40.8" fill="#ecc8b4"/><g filter="url(#bl)"><rect x="568" y="335" width="33" height="5.4" fill="#3c2c24"/><rect x="574" y="336.4" width="20" height="1.6" fill="#e8e0d8"/><ellipse cx="570" cy="352" rx="4.4" ry="16" fill="#3a2a22"/><ellipse cx="599" cy="352" rx="4.6" ry="14" fill="#33241e"/><ellipse cx="584" cy="346" rx="8" ry="5" fill="#f4dccc"/><ellipse cx="584" cy="351.6" rx="3.6" ry="1.8" fill="#e06a88"/><ellipse cx="584" cy="362" rx="9" ry="7" fill="#f0d0c0"/><ellipse cx="578" cy="371" rx="2.6" ry="1.4" fill="#5a5050"/><ellipse cx="590" cy="371" rx="2.6" ry="1.4" fill="#5a5050"/></g></g>
<line x1="616.3" y1="191.5" x2="616.3" y2="389.5" stroke="#9a9a9a" stroke-width="0.6" />
<text x="622.7" y="201.56" font-size="4.9" fill="#222" stroke="#222" stroke-width="0.13" >File:</text>
<text x="650.2" y="201.56" font-size="4.9" fill="#222" stroke="#222" stroke-width="0.13" >7201440.prn</text>
<text x="622.7" y="213.34" font-size="4.9" fill="#222" stroke="#222" stroke-width="0.13" >Dpi:</text>
<text x="650.2" y="213.34" font-size="4.9" fill="#222" stroke="#222" stroke-width="0.13" >720 * 1440</text>
<text x="622.7" y="225.12" font-size="4.9" fill="#222" stroke="#222" stroke-width="0.13" >Colors:</text>
<text x="650.2" y="225.12" font-size="4.9" fill="#222" stroke="#222" stroke-width="0.13" >5</text>
<text x="622.7" y="236.9" font-size="4.9" fill="#222" stroke="#222" stroke-width="0.13" >Bits:</text>
<text x="650.2" y="236.9" font-size="4.9" fill="#222" stroke="#222" stroke-width="0.13" >2</text>
<text x="622.7" y="248.68" font-size="4.9" fill="#222" stroke="#222" stroke-width="0.13" >Width:</text>
<text x="650.2" y="248.68" font-size="4.9" fill="#222" stroke="#222" stroke-width="0.13" >244.51 mm</text>
<text x="680" y="248.68" font-size="4.9" fill="#222" stroke="#222" stroke-width="0.13" >6931 pt</text>
<text x="622.7" y="260.46" font-size="4.9" fill="#222" stroke="#222" stroke-width="0.13" >Height:</text>
<text x="650.2" y="260.46" font-size="4.9" fill="#222" stroke="#222" stroke-width="0.13" >169.90 mm</text>
<text x="680" y="260.46" font-size="4.9" fill="#222" stroke="#222" stroke-width="0.13" >9632 pt</text>
<text x="622.7" y="272.24" font-size="4.9" fill="#222" stroke="#222" stroke-width="0.13" >Area:</text>
<text x="650.2" y="272.24" font-size="4.9" fill="#222" stroke="#222" stroke-width="0.13" >0.042 m2</text>
<text x="622.7" y="284.02" font-size="4.9" fill="#222" stroke="#222" stroke-width="0.13" >Print time:</text>
<text x="650.2" y="284.02" font-size="4.9" fill="#222" stroke="#222" stroke-width="0.13" >0:00:00</text>
<text x="622.7" y="295.8" font-size="4.9" fill="#222" stroke="#222" stroke-width="0.13" >Progress:</text>
<text x="622.7" y="307.58" font-size="4.9" fill="#222" stroke="#222" stroke-width="0.13" >Speed:</text>
<text x="650.2" y="307.58" font-size="4.9" fill="#222" stroke="#222" stroke-width="0.13" >0.00000 m2/h</text>
<line x1="131" y1="389.5" x2="733" y2="389.5" stroke="#8c8c8c" stroke-width="0.7" />
<rect x="131" y="389.9" width="602" height="57.6" fill="#fff"/>
<rect x="131" y="413.8" width="601.4" height="8.5" fill="#de7c08"/>
<rect x="131" y="447.5" width="602" height="11.4" fill="#f7f7f7"/>
<line x1="131" y1="447.3" x2="733" y2="447.3" stroke="#c4d0dc" stroke-width="0.6" />
<path d="M662.6 452l3 2.6l-3 2.6" fill="none" stroke="#1c74e0" stroke-width="1.2"/><rect x="670.6" y="451.9" width="5.4" height="5" fill="#fff" stroke="#1c74e0" stroke-width="1"/><rect x="671.8" y="453.2" width="3" height="1.4" fill="#1c74e0"/><g fill="#bcbcbc"><circle cx="682.8" cy="452.6" r="1.3"/><path d="M680.2 457.4v-1.8a2.6 1.8 0 0 1 5.2 0v1.8z"/></g><path d="M689 452.2l1.7 -0.9h2.6l1.7 0.9l0.9 1.7l-1.3 0.9l-0.6 -0.6v3.6h-4v-3.6l-0.6 0.6l-1.3 -0.9z" fill="#1c74e0"/><rect x="698.8" y="451.9" width="2.4" height="2.4" fill="#1c74e0"/><rect x="701.8" y="451.9" width="2.4" height="2.4" fill="#1c74e0"/><rect x="698.8" y="454.9" width="2.4" height="2.4" fill="#1c74e0"/><rect x="701.8" y="454.9" width="2.4" height="2.4" fill="#1c74e0"/>
<rect x="706" y="449.3" width="27" height="9.6" fill="#efefef"/>
<line x1="706" y1="449.6" x2="733" y2="449.6" stroke="#555" stroke-width="0.7" /><line x1="706.2" y1="449.3" x2="706.2" y2="458.9" stroke="#999" stroke-width="0.5" />
<text x="707.6" y="456.29" font-size="4.7" fill="#222" stroke="#222" stroke-width="0.13" >It's flashing</text></g>
<g id="darkwin"><rect x="60.2" y="373.6" width="603.7" height="323.2" fill="#1b1b1b"/>
<line x1="60.2" y1="373.8" x2="663.9" y2="373.8" stroke="#8a8a8a" stroke-width="0.5" />
<line x1="60.2" y1="386.4" x2="663.9" y2="386.4" stroke="#333" stroke-width="0.6" />
<g transform="translate(71.2 379.6)"><rect x="-2.6" y="-4.4" width="5.2" height="3" fill="#9cd0f4"/><rect x="0.2" y="-4.4" width="1.6" height="1.6" fill="#8cd848"/><rect x="-4.8" y="-2" width="9.6" height="5" rx="1.2" fill="#5f8aae"/><rect x="-3.6" y="-0.6" width="7.2" height="1" fill="#3f6a8e"/><rect x="-2.7" y="1.2" width="1.35" height="3.3" fill="#10b4ea"/><rect x="-1.35" y="1.2" width="1.35" height="3.3" fill="#e8188c"/><rect x="0" y="1.2" width="1.35" height="3.3" fill="#f8d410"/><rect x="1.35" y="1.2" width="1.35" height="3.3" fill="#1a1a1a"/></g>
<text x="350.3" y="379.99" font-size="4.7" fill="#d6d6d6" text-anchor="middle" stroke="#d6d6d6" stroke-width="0.13" >BetterPrinter 4720-4H-4C-W-B-PT 1.0.0.30</text>
<rect x="625.9" y="374.3" width="35.7" height="8.8" fill="url(#gbtn)" stroke="#a8cce0" stroke-width="0.4"/>
<line x1="637.9" y1="374.3" x2="637.9" y2="383.1" stroke="#a0c6dc" stroke-width="0.4" /><line x1="649.8" y1="374.3" x2="649.8" y2="383.1" stroke="#a0c6dc" stroke-width="0.4" />
<line x1="631" y1="379.4" x2="635" y2="379.4" stroke="#1c3c6c" stroke-width="0.9" />
<rect x="642.2" y="376.6" width="4.4" height="4.2" fill="none" stroke="#2c4c7c" stroke-width="0.7"/>
<text x="655.5" y="380.4" font-size="5" fill="#3c5c8c" text-anchor="middle" stroke="#3c5c8c" stroke-width="0.13" >x</text>
<g transform="translate(69.8 398.8)" ><rect x="-3.9" y="-6" width="7.8" height="3.2" stroke="#929292" stroke-width="1.15" fill="none" stroke-linejoin="round" stroke-linecap="round"/><rect x="-6.2" y="-2.9" width="12.4" height="6.6" rx="1.2" stroke="#929292" stroke-width="1.15" fill="none" stroke-linejoin="round" stroke-linecap="round"/><rect x="-3.9" y="1.2" width="7.8" height="5" fill="#1b1b1b" stroke="#929292" stroke-width="1.15"/><path d="M-2.2 3.2H2.2M-2.2 4.6H1" stroke="#929292" stroke-width="0.7"/><circle cx="4.2" cy="-0.9" r="0.7" fill="#929292"/></g>
<text x="69.8" y="411.69" font-size="4.7" fill="#b0b0b0" text-anchor="middle" stroke="#b0b0b0" stroke-width="0.13" >Print</text>
<g transform="translate(88.67 398.8)" ><rect x="-4.7" y="-4.7" width="9.4" height="9.4" rx="1.1" fill="#8a8a8a"/></g>
<text x="88.67" y="411.69" font-size="4.7" fill="#b0b0b0" text-anchor="middle" stroke="#b0b0b0" stroke-width="0.13" >Stop</text>
<g transform="translate(107.54 398.8)" ><rect x="-3.9" y="-6" width="2.3" height="12" rx="0.5" fill="#8a8a8a"/><rect x="1.7" y="-6" width="2.3" height="12" rx="0.5" fill="#8a8a8a"/></g>
<text x="107.54" y="411.69" font-size="4.7" fill="#b0b0b0" text-anchor="middle" stroke="#b0b0b0" stroke-width="0.13" >Pause</text>
<g transform="translate(126.41 398.8)" ><circle r="4.5" stroke="#929292" stroke-width="0.95" fill="none" stroke-linejoin="round" stroke-linecap="round"/><circle r="2" stroke="#929292" stroke-width="0.85" fill="none" stroke-linejoin="round" stroke-linecap="round"/><circle r="0.75" fill="#929292"/><path d="M0 -6.7V-2.6M0 6.7V2.6M-6.7 0H-2.6M6.7 0H2.6" stroke="#929292" stroke-width="0.95" fill="none" stroke-linejoin="round" stroke-linecap="round"/></g>
<text x="126.41" y="411.69" font-size="4.7" fill="#b0b0b0" text-anchor="middle" stroke="#b0b0b0" stroke-width="0.13" >Adjust</text>
<g transform="translate(145.28 398.8)" ><path d="M-5.3 -1.4H1.7L1.2 5.3H-4.7Z" fill="#929292" stroke="#929292" stroke-width="0.7" stroke-linejoin="round"/><path d="M-4.9 -1.5C-4.4 -3.5 0.8 -3.5 1.4 -1.5" stroke="#929292" stroke-width="0.8" fill="none" stroke-linejoin="round" stroke-linecap="round"/><circle cx="-2.6" cy="-5.4" r="0.65" fill="#929292"/><circle cx="0.2" cy="-6.2" r="0.55" fill="#929292"/><circle cx="-0.9" cy="-4.1" r="0.55" fill="#929292"/><circle cx="1.6" cy="-4.6" r="0.5" fill="#929292"/><path d="M2.7 -3.4L4.5 1.6" stroke="#929292" stroke-width="0.9" fill="none" stroke-linejoin="round" stroke-linecap="round"/><path d="M4.3 1.3L6.5 5.4H2.5Z" fill="#1b1b1b" stroke="#929292" stroke-width="0.8" stroke-linejoin="round"/></g>
<text x="145.28" y="411.69" font-size="4.7" fill="#b0b0b0" text-anchor="middle" stroke="#b0b0b0" stroke-width="0.13" >Clean</text>
<g transform="translate(164.15 398.8)" ><path d="M0 -6.6C1.6 -4 3.9 -1.4 3.9 0.7A3.9 3.9 0 0 1 -3.9 0.7C-3.9 -1.4 -1.6 -4 0 -6.6Z" stroke="#929292" stroke-width="1.15" fill="none" stroke-linejoin="round" stroke-linecap="round"/><path d="M-1.6 0.6A1.7 1.7 0 0 0 0 2.4" stroke="#929292" stroke-width="0.8" fill="none" stroke-linejoin="round" stroke-linecap="round"/><path d="M-6 5.4Q-4.5 3.6 -3 5.4T0 5.4T3 5.4T6 5.4" stroke="#929292" stroke-width="1.2" fill="none" stroke-linecap="round"/></g>
<text x="164.15" y="411.69" font-size="4.7" fill="#b0b0b0" text-anchor="middle" stroke="#b0b0b0" stroke-width="0.13" >Flash</text>
<g transform="translate(183.02 398.8)" ><path d="M-6.3 0L-0.6 -5.9L0.9 -4.4L-2.3 -1.2H6.3V1.2H-2.3L0.9 4.4L-0.6 5.9Z" stroke="#929292" stroke-width="1.15" fill="none" stroke-linejoin="round" stroke-linecap="round"/></g>
<text x="183.02" y="411.69" font-size="4.7" fill="#b0b0b0" text-anchor="middle" stroke="#b0b0b0" stroke-width="0.13" >Left</text>
<g transform="translate(201.89 398.8)" ><path d="M-6.3 0L-0.6 -5.9L0.9 -4.4L-2.3 -1.2H6.3V1.2H-2.3L0.9 4.4L-0.6 5.9Z" transform="scale(-1 1)" stroke="#929292" stroke-width="1.15" fill="none" stroke-linejoin="round" stroke-linecap="round"/></g>
<text x="201.89" y="411.69" font-size="4.7" fill="#b0b0b0" text-anchor="middle" stroke="#b0b0b0" stroke-width="0.13" >Right</text>
<g transform="translate(220.76 398.8)" ><rect x="-5.8" y="-6" width="11.6" height="12" rx="0.8" stroke="#929292" stroke-width="1.15" fill="none" stroke-linejoin="round" stroke-linecap="round"/><path d="M-5.8 3.7H5.8" stroke="#929292" stroke-width="1.15" fill="none" stroke-linejoin="round" stroke-linecap="round"/><path d="M-1.2 -4.2H1.2V-0.8H3.3L0 2.6L-3.3 -0.8H-1.2Z" fill="#929292"/></g>
<text x="220.76" y="411.69" font-size="4.7" fill="#b0b0b0" text-anchor="middle" stroke="#b0b0b0" stroke-width="0.13" >Feed</text>
<g transform="translate(239.63 398.8)" ><rect x="-5.8" y="-6" width="11.6" height="12" rx="0.8" stroke="#929292" stroke-width="1.15" fill="none" stroke-linejoin="round" stroke-linecap="round"/><path d="M-5.8 -3.7H5.8" stroke="#929292" stroke-width="1.15" fill="none" stroke-linejoin="round" stroke-linecap="round"/><path d="M-1.2 4.4H1.2V1H3.3L0 -2.4L-3.3 1H-1.2Z" fill="#929292"/></g>
<text x="239.63" y="411.69" font-size="4.7" fill="#b0b0b0" text-anchor="middle" stroke="#b0b0b0" stroke-width="0.13" >Back</text>
<g transform="translate(258.5 398.8)" ><path d="M-6.3 0L-0.6 -5.9L0.9 -4.4L-2.3 -1.2H6.3V1.2H-2.3L0.9 4.4L-0.6 5.9Z" transform="rotate(90)" stroke="#929292" stroke-width="1.15" fill="none" stroke-linejoin="round" stroke-linecap="round"/></g>
<text x="258.5" y="411.69" font-size="4.7" fill="#b0b0b0" text-anchor="middle" stroke="#b0b0b0" stroke-width="0.13" >Up</text>
<g transform="translate(277.37 398.8)" ><path d="M-6.3 0L-0.6 -5.9L0.9 -4.4L-2.3 -1.2H6.3V1.2H-2.3L0.9 4.4L-0.6 5.9Z" transform="rotate(-90)" stroke="#929292" stroke-width="1.15" fill="none" stroke-linejoin="round" stroke-linecap="round"/></g>
<text x="277.37" y="411.69" font-size="4.7" fill="#b0b0b0" text-anchor="middle" stroke="#b0b0b0" stroke-width="0.13" >Down</text>
<g transform="translate(296.24 398.8)" ><path d="M-1.6 -0.9L2.6 -6.2L6.8 -0.9" stroke="#929292" stroke-width="0.9" fill="none" stroke-linejoin="round" stroke-linecap="round"/><path d="M0 -0.4L2.6 -3.8L5.2 -0.4" stroke="#929292" stroke-width="0.7" fill="none" stroke-linejoin="round" stroke-linecap="round"/><path d="M0 -0.4V5M5.2 -0.4V5" stroke="#929292" stroke-width="0.8" fill="none" stroke-linejoin="round" stroke-linecap="round"/><path d="M1.7 5V2.3A0.9 0.9 0 0 1 3.5 2.3V5" stroke="#929292" stroke-width="0.7" fill="none" stroke-linejoin="round" stroke-linecap="round"/><text x="-4.1" y="4.6" font-size="6" font-weight="bold" text-anchor="middle" fill="#929292">X</text><path d="M-6.7 5.8H6.9" stroke="#929292" stroke-width="1"/></g>
<text x="296.24" y="411.69" font-size="4.7" fill="#b0b0b0" text-anchor="middle" stroke="#b0b0b0" stroke-width="0.13" >X-Rst</text>
<g transform="translate(315.11 398.8)" ><path d="M-1.6 -0.9L2.6 -6.2L6.8 -0.9" stroke="#929292" stroke-width="0.9" fill="none" stroke-linejoin="round" stroke-linecap="round"/><path d="M0 -0.4L2.6 -3.8L5.2 -0.4" stroke="#929292" stroke-width="0.7" fill="none" stroke-linejoin="round" stroke-linecap="round"/><path d="M0 -0.4V5M5.2 -0.4V5" stroke="#929292" stroke-width="0.8" fill="none" stroke-linejoin="round" stroke-linecap="round"/><path d="M1.7 5V2.3A0.9 0.9 0 0 1 3.5 2.3V5" stroke="#929292" stroke-width="0.7" fill="none" stroke-linejoin="round" stroke-linecap="round"/><text x="-4.1" y="4.6" font-size="6" font-weight="bold" text-anchor="middle" fill="#929292">Y</text><path d="M-6.7 5.8H6.9" stroke="#929292" stroke-width="1"/></g>
<text x="315.11" y="411.69" font-size="4.7" fill="#b0b0b0" text-anchor="middle" stroke="#b0b0b0" stroke-width="0.13" >Y-Rst</text>
<g transform="translate(333.98 398.8)" ><path d="M-1.6 -0.9L2.6 -6.2L6.8 -0.9" stroke="#929292" stroke-width="0.9" fill="none" stroke-linejoin="round" stroke-linecap="round"/><path d="M0 -0.4L2.6 -3.8L5.2 -0.4" stroke="#929292" stroke-width="0.7" fill="none" stroke-linejoin="round" stroke-linecap="round"/><path d="M0 -0.4V5M5.2 -0.4V5" stroke="#929292" stroke-width="0.8" fill="none" stroke-linejoin="round" stroke-linecap="round"/><path d="M1.7 5V2.3A0.9 0.9 0 0 1 3.5 2.3V5" stroke="#929292" stroke-width="0.7" fill="none" stroke-linejoin="round" stroke-linecap="round"/><text x="-4.1" y="4.6" font-size="6" font-weight="bold" text-anchor="middle" fill="#929292">Z</text><path d="M-6.7 5.8H6.9" stroke="#929292" stroke-width="1"/></g>
<text x="333.98" y="411.69" font-size="4.7" fill="#b0b0b0" text-anchor="middle" stroke="#b0b0b0" stroke-width="0.13" >Z-Rst</text>
<text x="84.9" y="422.96" font-size="4.9" fill="#d6d6d6" text-anchor="end" stroke="#d6d6d6" stroke-width="0.13" >X Margin:</text><rect x="87.4" y="417.4" width="20.3" height="7.6" fill="#3c3c3c" stroke="#4a4a4a" stroke-width="0.6"/><text x="88.4" y="422.96" font-size="4.9" fill="#d6d6d6" stroke="#d6d6d6" stroke-width="0.13" >310.0</text>
<rect x="112.2" y="418.8" width="4.8" height="4.8" fill="#1b1b1b" stroke="#5a8aff" stroke-width="0.6"/><path d="M113.2 421.2L114.2 422.4L116.1 419.9" fill="none" stroke="#5a8aff" stroke-width="0.8"/>
<text x="135.6" y="422.96" font-size="4.9" fill="#d6d6d6" text-anchor="end" stroke="#d6d6d6" stroke-width="0.13" >Margin:</text><rect x="139" y="417.4" width="19.8" height="7.6" fill="#3c3c3c" stroke="#4a4a4a" stroke-width="0.6"/><text x="140" y="422.96" font-size="4.9" fill="#d6d6d6" stroke="#d6d6d6" stroke-width="0.13" >10.0</text>
<text x="186.6" y="422.96" font-size="4.9" fill="#d6d6d6" text-anchor="end" stroke="#d6d6d6" stroke-width="0.13" >Z Margin:</text><rect x="190.4" y="417.4" width="19.6" height="7.6" fill="#3c3c3c" stroke="#4a4a4a" stroke-width="0.6"/><text x="191.4" y="422.96" font-size="4.9" fill="#d6d6d6" stroke="#d6d6d6" stroke-width="0.13" >4.0</text>
<text x="237.4" y="422.96" font-size="4.9" fill="#d6d6d6" text-anchor="end" stroke="#d6d6d6" stroke-width="0.13" >Speed:</text><rect x="241.6" y="417.4" width="30.8" height="7.6" fill="#1b1b1b" stroke="#4a4a4a" stroke-width="0.6"/><text x="243.1" y="422.96" font-size="4.9" fill="#d6d6d6" stroke="#d6d6d6" stroke-width="0.13" font-family="Liberation Mono,monospace" font-weight="bold" textLength="10.2">Fast</text><path d="M266.2 420.1L268.4 422.4L270.6 420.1" fill="none" stroke="#ddd" stroke-width="0.85"/>
<text x="300.8" y="422.96" font-size="4.9" fill="#d6d6d6" text-anchor="end" stroke="#d6d6d6" stroke-width="0.13" >Print dir:</text><rect x="304.6" y="417.4" width="31.1" height="7.6" fill="#1b1b1b" stroke="#4a4a4a" stroke-width="0.6"/><text x="306.1" y="422.96" font-size="4.9" fill="#d6d6d6" stroke="#d6d6d6" stroke-width="0.13" font-family="Liberation Mono,monospace" font-weight="bold" textLength="15.3">Bi-Dir</text><path d="M329.5 420.1L331.7 422.4L333.9 420.1" fill="none" stroke="#ddd" stroke-width="0.85"/>
<rect x="340.6" y="418.8" width="4.8" height="4.8" fill="#1b1b1b" stroke="#5a8aff" stroke-width="0.6"/><path d="M341.6 421.2L342.6 422.4L344.5 419.9" fill="none" stroke="#5a8aff" stroke-width="0.8"/><text x="347.6" y="422.96" font-size="4.9" fill="#d6d6d6" stroke="#d6d6d6" stroke-width="0.13" >Colc</text>
<rect x="360.4" y="418.8" width="4.8" height="4.8" fill="#1b1b1b" stroke="#5a8aff" stroke-width="0.6"/><path d="M361.4 421.2L362.4 422.4L364.3 419.9" fill="none" stroke="#5a8aff" stroke-width="0.8"/><text x="366.8" y="422.96" font-size="4.9" fill="#d6d6d6" stroke="#d6d6d6" stroke-width="0.13" >Whi</text>
<text x="396.6" y="422.96" font-size="4.9" fill="#d6d6d6" text-anchor="end" stroke="#d6d6d6" stroke-width="0.13" >Step:</text><text x="399.4" y="423" font-size="5" fill="#666" text-anchor="middle" stroke="#666" stroke-width="0.13" >+</text>
<rect x="404.6" y="417.4" width="15.1" height="7.6" fill="#3c3c3c" stroke="#4a4a4a" stroke-width="0.6"/><text x="412.15" y="422.96" font-size="4.9" fill="#d6d6d6" text-anchor="middle" stroke="#d6d6d6" stroke-width="0.13" >0</text><text x="423" y="423" font-size="5" fill="#666" text-anchor="middle" stroke="#666" stroke-width="0.13" >-</text>
<text x="446" y="422.96" font-size="4.9" fill="#d6d6d6" text-anchor="end" stroke="#d6d6d6" stroke-width="0.13" >DbDir:</text><text x="449.2" y="423" font-size="5" fill="#666" text-anchor="middle" stroke="#666" stroke-width="0.13" >+</text>
<rect x="453.6" y="417.4" width="15.2" height="7.6" fill="#3c3c3c" stroke="#4a4a4a" stroke-width="0.6"/><text x="461.2" y="422.96" font-size="4.9" fill="#d6d6d6" text-anchor="middle" stroke="#d6d6d6" stroke-width="0.13" >0</text><text x="472" y="423" font-size="5" fill="#666" text-anchor="middle" stroke="#666" stroke-width="0.13" >-</text>
<line x1="60.2" y1="428.3" x2="663.9" y2="428.3" stroke="#383838" stroke-width="0.6" />
<g transform="translate(569.6 388.8) scale(1.05 1)"><defs><linearGradient id="lgb1" x1="0" y1="0" x2="0" y2="1"><stop offset="0" stop-color="#12a0e8"/><stop offset="1" stop-color="#0a78c8"/></linearGradient></defs><path d="M5.2 3.2L12.5 1.2L9.6 38.2L0 38.4Z" fill="url(#lgb1)"/><path d="M11.5 0.6C20 -1.2 27.5 2.5 26.2 10.5C25.4 15.5 21.6 18.6 16.2 19.6L10.8 20.2L11.3 14.6C16.2 14.6 19.8 13 20 9.6C20.2 6.4 16.6 5.6 11.2 7Z" fill="#79c143"/><path d="M10.6 19.6C19.5 16.5 26.6 20.6 26 28C25.4 35 18 38.4 9.4 38.3L9.9 32C15.6 32 19.8 30.4 20 27.2C20.2 23.8 16 23.6 10.3 25.4Z" fill="#1c6fc0"/></g><text x="600.6" y="409.76" font-size="14.9" fill="#2b7ccb" font-family="DejaVu Sans,Liberation Sans,sans-serif" stroke="#2b7ccb" stroke-width="0.25" textLength="43.5">etter</text><text x="600.6" y="424.76" font-size="14.9" fill="#80c342" font-family="DejaVu Sans,Liberation Sans,sans-serif" stroke="#80c342" stroke-width="0.25" textLength="43.5">rinter</text><circle cx="614" cy="394.8" r="1.1" fill="#29abe2"/><circle cx="617.8" cy="392.2" r="1.3" fill="#1b4fa0"/><circle cx="623.2" cy="390.6" r="1.7" fill="#8cc63f"/><circle cx="628.6" cy="392.2" r="2" fill="#0a0a0a"/>
<rect x="60.6" y="443" width="39.6" height="13.7" fill="#3c8ede"/>
<line x1="100.8" y1="428.5" x2="100.8" y2="626" stroke="#333" stroke-width="0.6" />
<g transform="translate(65.2 436.8)"><path d="M-2.6 -2.2L0.6 -3.2V2.6L-2.6 3.2Z M0.6 -3.2H2.8V2.6H0.6" fill="none" stroke="#1818d8" stroke-width="0.8" stroke-linejoin="round" stroke-linecap="round"/></g>
<text x="70.8" y="438.56" font-size="4.9" fill="#d6d6d6" stroke="#d6d6d6" stroke-width="0.13" >Task browse</text>
<g transform="translate(65.2 450.9)"><circle r="2.6" fill="none" stroke="#1038ee" stroke-width="0.8" stroke-linejoin="round" stroke-linecap="round"/><circle r="1" fill="none" stroke="#1038ee" stroke-width="0.8" stroke-linejoin="round" stroke-linecap="round"/><path d="M0 -3.4V-2.6M0 3.4V2.6M-3.4 0H-2.6M3.4 0H2.6" fill="none" stroke="#1038ee" stroke-width="0.8" stroke-linejoin="round" stroke-linecap="round"/></g>
<text x="70.8" y="452.66" font-size="4.9" fill="#fff" stroke="#fff" stroke-width="0.13" >Task set</text>
<g transform="translate(65.2 465)"><rect x="-2" y="-3.2" width="4" height="1.8" fill="none" stroke="#1818d8" stroke-width="0.8" stroke-linejoin="round" stroke-linecap="round"/><rect x="-3" y="-1.4" width="6" height="3" rx="0.5" fill="none" stroke="#1818d8" stroke-width="0.8" stroke-linejoin="round" stroke-linecap="round"/><rect x="-1.9" y="0.6" width="3.8" height="2.6" fill="none" stroke="#1818d8" stroke-width="0.8" stroke-linejoin="round" stroke-linecap="round"/></g>
<text x="70.8" y="466.76" font-size="4.9" fill="#d6d6d6" stroke="#d6d6d6" stroke-width="0.13" >Print set</text>
<g transform="translate(65.2 479.1)"><path d="M-3 -1.6V-3H-1.6M1.6 -3H3V-1.6M3 1.6V3H1.6M-1.6 3H-3V1.6" fill="none" stroke="#1818d8" stroke-width="0.8" stroke-linejoin="round" stroke-linecap="round"/><circle r="0.6" fill="#1818d8"/></g>
<text x="70.8" y="480.86" font-size="4.9" fill="#d6d6d6" stroke="#d6d6d6" stroke-width="0.13" >Adjust set</text>
<g transform="translate(65.2 493.2)"><path d="M-3.1 3.1L0.3 -0.3" stroke="#1818d8" stroke-width="2.1" stroke-linecap="round" fill="none"/><path d="M-3.1 3.1L0.3 -0.3" stroke="#1b1b1b" stroke-width="0.8" stroke-linecap="round" fill="none"/><path d="M0.9 -3.3A2.3 2.3 0 1 0 3.3 -0.9L1.9 -0.5L0.6 -1.8Z" fill="#1b1b1b" stroke="#1818d8" stroke-width="0.75" stroke-linejoin="round"/></g>
<text x="70.8" y="494.96" font-size="4.9" fill="#d6d6d6" stroke="#d6d6d6" stroke-width="0.13" >System set</text>
<rect x="102.6" y="429.8" width="137" height="39.5" fill="none" stroke="#3a3a3a" stroke-width="0.6"/>
<rect x="102.6" y="472.5" width="137" height="38.5" fill="none" stroke="#3a3a3a" stroke-width="0.6"/>
<line x1="242.3" y1="428.5" x2="242.3" y2="626" stroke="#333" stroke-width="0.6" />
<text x="135.8" y="438.96" font-size="4.9" fill="#d6d6d6" text-anchor="end" stroke="#d6d6d6" stroke-width="0.13" >Pass:</text><rect x="136.3" y="433.5" width="34.2" height="7.3" fill="#1b1b1b" stroke="#4a4a4a" stroke-width="0.6"/><text x="137.8" y="438.91" font-size="4.9" fill="#d6d6d6" stroke="#d6d6d6" stroke-width="0.13" >4</text><path d="M164.3 436.05L166.5 438.35L168.7 436.05" fill="none" stroke="#ddd" stroke-width="0.85"/>
<text x="135.8" y="450.46" font-size="4.9" fill="#d6d6d6" text-anchor="end" stroke="#d6d6d6" stroke-width="0.13" >X Page:</text><rect x="136.3" y="445" width="34.2" height="7.4" fill="#3c3c3c" stroke="#4a4a4a" stroke-width="0.6"/><text x="137.3" y="450.46" font-size="4.9" fill="#d6d6d6" stroke="#d6d6d6" stroke-width="0.13" >1</text>
<text x="135.8" y="461.86" font-size="4.9" fill="#d6d6d6" text-anchor="end" stroke="#d6d6d6" stroke-width="0.13" >Y Page:</text><rect x="136.3" y="456.4" width="34.2" height="7.4" fill="#3c3c3c" stroke="#4a4a4a" stroke-width="0.6"/><text x="137.3" y="461.86" font-size="4.9" fill="#d6d6d6" stroke="#d6d6d6" stroke-width="0.13" >1</text>
<text x="202.6" y="438.96" font-size="4.9" fill="#d6d6d6" text-anchor="end" stroke="#d6d6d6" stroke-width="0.13" >Page:</text><rect x="203" y="433.5" width="35" height="7.3" fill="#3c3c3c" stroke="#4a4a4a" stroke-width="0.6"/><text x="204" y="438.91" font-size="4.9" fill="#d6d6d6" stroke="#d6d6d6" stroke-width="0.13" >1</text>
<text x="202.6" y="450.46" font-size="4.9" fill="#d6d6d6" text-anchor="end" stroke="#d6d6d6" stroke-width="0.13" >X Space:</text><rect x="203" y="445" width="35" height="7.4" fill="#3c3c3c" stroke="#4a4a4a" stroke-width="0.6"/><text x="204" y="450.46" font-size="4.9" fill="#d6d6d6" stroke="#d6d6d6" stroke-width="0.13" >0.0</text>
<text x="202.6" y="461.86" font-size="4.9" fill="#d6d6d6" text-anchor="end" stroke="#d6d6d6" stroke-width="0.13" >Y Space:</text><rect x="203" y="456.4" width="35" height="7.4" fill="#3c3c3c" stroke="#4a4a4a" stroke-width="0.6"/><text x="204" y="461.86" font-size="4.9" fill="#d6d6d6" stroke="#d6d6d6" stroke-width="0.13" >0.0</text>
<rect x="104.8" y="475.9" width="4.6" height="4.6" fill="#1b1b1b" stroke="#555" stroke-width="0.6"/><text x="111.2" y="479.96" font-size="4.9" fill="#d6d6d6" stroke="#d6d6d6" stroke-width="0.13" >Roi enable</text>
<text x="112.6" y="491.66" font-size="4.9" fill="#d6d6d6" text-anchor="end" stroke="#d6d6d6" stroke-width="0.13" >x:</text><rect x="113.5" y="486.2" width="23.8" height="7.4" fill="#3c3c3c" stroke="#4a4a4a" stroke-width="0.6"/><text x="114.5" y="491.66" font-size="4.9" fill="#6c6c6c" stroke="#6c6c6c" stroke-width="0.13" >0</text>
<text x="146.4" y="491.66" font-size="4.9" fill="#d6d6d6" text-anchor="end" stroke="#d6d6d6" stroke-width="0.13" >y:</text><rect x="147.4" y="486.2" width="23.1" height="7.4" fill="#3c3c3c" stroke="#4a4a4a" stroke-width="0.6"/><text x="148.4" y="491.66" font-size="4.9" fill="#6c6c6c" stroke="#6c6c6c" stroke-width="0.13" >0</text>
<text x="179.6" y="491.66" font-size="4.9" fill="#d6d6d6" text-anchor="end" stroke="#d6d6d6" stroke-width="0.13" >w:</text><rect x="180.6" y="486.2" width="23.8" height="7.4" fill="#3c3c3c" stroke="#4a4a4a" stroke-width="0.6"/><text x="181.6" y="491.66" font-size="4.9" fill="#6c6c6c" stroke="#6c6c6c" stroke-width="0.13" >3167</text>
<text x="213.2" y="491.66" font-size="4.9" fill="#d6d6d6" text-anchor="end" stroke="#d6d6d6" stroke-width="0.13" >h:</text><rect x="214.2" y="486.2" width="23.8" height="7.4" fill="#3c3c3c" stroke="#4a4a4a" stroke-width="0.6"/><text x="215.2" y="491.66" font-size="4.9" fill="#6c6c6c" stroke="#6c6c6c" stroke-width="0.13" >5739</text>
<rect x="114.3" y="499.3" width="4.6" height="4.6" fill="#1b1b1b" stroke="#555" stroke-width="0.6"/><text x="121" y="503.36" font-size="4.9" fill="#d6d6d6" stroke="#d6d6d6" stroke-width="0.13" >Reverse</text>
<rect x="181" y="499.3" width="4.6" height="4.6" fill="#1b1b1b" stroke="#555" stroke-width="0.6"/><text x="188" y="503.36" font-size="4.9" fill="#d6d6d6" stroke="#d6d6d6" stroke-width="0.13" >H Mirror</text>
<rect x="102.2" y="613.8" width="137.8" height="8" fill="none" stroke="#2c4a78" stroke-width="0.7"/><text x="171" y="619.56" font-size="4.9" fill="#777" text-anchor="middle" stroke="#777" stroke-width="0.13" >Save</text>
<rect x="305.3" y="431" width="179" height="193.7" fill="#fff"/><rect x="312.2" y="437.5" width="165.5" height="165" fill="#000" rx="2.6"/><rect x="314.7" y="439.9" width="160.2" height="158.7" fill="#fff" rx="1"/><rect x="318.2" y="445" width="151.4" height="151.6" fill="#000"/><rect x="323.2" y="449.6" width="52.8" height="9.2" fill="#fff" rx="1"/><rect x="330" y="459.9" width="46" height="9.6" fill="#fff" rx="1"/><text x="350" y="453" font-size="2.9" fill="#222" text-anchor="middle" transform="rotate(180 350 452)">DIGITAL TEXTILE PRINTING SAMPLE</text><text x="350" y="457.2" font-size="2.9" fill="#222" text-anchor="middle" transform="rotate(180 350 456.2)">720 x 1200 dpi 4 pass</text><text x="353" y="463.4" font-size="2.9" fill="#222" text-anchor="middle" transform="rotate(180 353 462.4)">2021 - 06</text><text x="353" y="467.4" font-size="2.9" fill="#222" text-anchor="middle" transform="rotate(180 353 466.4)">CMYK + W test</text><rect x="320.7" y="472" width="62.7" height="6.7" fill="url(#qgc)"/><rect x="320.7" y="480.18" width="62.7" height="6.7" fill="url(#qgy)"/><rect x="320.7" y="488.35" width="62.7" height="6.7" fill="url(#qry)"/><rect x="320.7" y="496.53" width="62.7" height="6.7" fill="url(#qrm)"/><rect x="320.7" y="504.7" width="62.7" height="6.7" fill="url(#qbm)"/><rect x="320.7" y="512.88" width="62.7" height="6.7" fill="url(#qbc)"/><rect x="320.7" y="521.06" width="62.7" height="6.7" fill="#eee"/><rect x="320.7" y="529.23" width="62.7" height="6.7" fill="url(#wo)"/><rect x="320.7" y="537.41" width="62.7" height="6.7" fill="url(#wb)"/><rect x="320.7" y="545.58" width="62.7" height="6.7" fill="url(#wg)"/><rect x="320.7" y="553.76" width="62.7" height="6.7" fill="url(#wr)"/><rect x="320.7" y="561.94" width="62.7" height="6.7" fill="url(#wk)"/><rect x="320.7" y="570.11" width="62.7" height="6.7" fill="url(#wy)"/><rect x="320.7" y="578.29" width="62.7" height="6.7" fill="url(#wm)"/><rect x="320.7" y="586.46" width="62.7" height="6.7" fill="url(#wc)"/><clipPath id="cp22"><rect x="387.4" y="447.8" width="82.2" height="146.6"/></clipPath><g clip-path="url(#cp22)"><rect x="386.4" y="446.8" width="84.2" height="148.6" fill="#f8e8e4"/><g filter="url(#bl)"><rect x="386" y="446" width="85" height="20" fill="#f9b4a6"/><rect x="386" y="460" width="85" height="6" fill="#fcc4b6"/><rect x="397" y="450.6" width="50" height="1.8" fill="#fff" opacity="0.85"/><rect x="401" y="456.6" width="52" height="1.6" fill="#f04858" opacity="0.8"/><polygon points="445.5,456 458,448.5 466,449 463.7,458 452,466.8 445,463" fill="#e8141e"/><rect x="449" y="455" width="13" height="1.2" fill="#fff" opacity="0.8"/><ellipse cx="467" cy="452" rx="3" ry="4" fill="#f8e890"/><rect x="386" y="465.6" width="85" height="60" fill="#fdf3f3"/><rect x="386" y="465.6" width="9" height="36" fill="#e9edf6"/><rect x="387.4" y="468" width="6" height="3.4" fill="#3f5fb0"/><rect x="388.4" y="474" width="6" height="3.4" fill="#3f5fb0"/><rect x="387.4" y="480" width="6" height="3.4" fill="#4a6ab8"/><rect x="388.4" y="486" width="6" height="3.4" fill="#3f5fb0"/><rect x="387.4" y="492" width="6" height="3.4" fill="#4a6ab8"/><polygon points="395.4,466.8 414.8,466.8 431.8,481.6 396.5,495.3" fill="#f86af0"/><polygon points="398,469 412,469 424,480 399,488" fill="#fb8af4" opacity="0.8"/><polygon points="415,466.8 420,466.8 436,481 432,483" fill="#5070b8" opacity="0.7"/><ellipse cx="424" cy="468.6" rx="5" ry="2" fill="#70d8e8" opacity="0.8"/><polygon points="431.8,466.8 443.2,466.8 441,473.6 434,472" fill="#e8141e"/><path d="M446 480C436 492 416 498 398.8 499.8" fill="none" stroke="#e81020" stroke-width="2.6" stroke-linecap="round"/><path d="M388 502C400 501 420 498 436 492" fill="none" stroke="#f4a0a0" stroke-width="1.2"/><rect x="438.7" y="475.8" width="27" height="1.4" fill="#3858a8" opacity="0.9"/><rect x="441" y="482" width="25" height="1.4" fill="#3858a8" opacity="0.9"/><rect x="446" y="489" width="20" height="1.4" fill="#3858a8" opacity="0.9"/><rect x="440" y="496.4" width="26" height="1.4" fill="#3858a8" opacity="0.9"/><rect x="444" y="503.8" width="22" height="1.4" fill="#3858a8" opacity="0.9"/><rect x="441" y="509.6" width="24" height="1.4" fill="#3858a8" opacity="0.9"/><rect x="448" y="517.4" width="18" height="1.4" fill="#3858a8" opacity="0.9"/><ellipse cx="451.2" cy="490.6" rx="3.6" ry="3.4" fill="#c060e0"/><ellipse cx="449" cy="496" rx="3.4" ry="4" fill="#f8a040"/><ellipse cx="452" cy="500" rx="4" ry="3" fill="#f8e060"/><ellipse cx="461" cy="486" rx="3" ry="5" fill="#f8e890" opacity="0.8"/><rect x="456.9" y="502" width="12.6" height="11.5" fill="#30c0f0"/><rect x="465" y="500" width="5" height="7" fill="#40e080"/><ellipse cx="425" cy="507.8" rx="2.6" ry="2.4" fill="#7088d0"/><rect x="386" y="502" width="8" height="20" fill="#f0a0c0"/><rect x="387" y="506" width="5" height="3" fill="#4060b0"/><rect x="387" y="514" width="5" height="3" fill="#5070c0"/><rect x="386" y="516" width="10" height="10" fill="#f08828"/><rect x="386" y="524" width="9" height="8" fill="#f8e040"/><rect x="392" y="518" width="10" height="20" fill="#e8ecf6"/><rect x="393" y="520" width="6" height="3" fill="#3060c0"/><rect x="394" y="526" width="6" height="3" fill="#3060c0"/><rect x="393" y="532" width="7" height="4" fill="#3868c8"/><rect x="456.9" y="514" width="13" height="17" fill="#40c0f0"/><rect x="458" y="520.4" width="10" height="1.4" fill="#3050b0" opacity="0.9"/><rect x="460" y="527.6" width="8" height="1.4" fill="#3050b0" opacity="0.9"/><rect x="463" y="536.6" width="6" height="1.4" fill="#3050b0" opacity="0.9"/><polygon points="443.2,516 456,514 470,530 470,568 462,566 452,540 444,526" fill="#e2883e"/><ellipse cx="463" cy="548" rx="6" ry="18" fill="#e89a52"/><polygon points="458,566 470,560 470,595 462,595" fill="#f0c898"/><rect x="386" y="548" width="17" height="48" fill="#4aa8f0"/><polygon points="387.4,540 411.3,541 409,553.6 392,556 387,552" fill="#c87838"/><polygon points="388.6,556 398,554 404.5,594.6 396,594.6" fill="#e0b070" opacity="0.9"/><polygon points="387,566 392,562 396,594.6 388,594.6" fill="#d8a868" opacity="0.7"/><ellipse cx="434" cy="570" rx="31" ry="33" fill="#fdf0f0"/><rect x="404" y="516" width="42" height="26" fill="#fdf2f1"/><path d="M406.8 537.6C418 530 432 524 444.4 519.4" fill="none" stroke="#35555f" stroke-width="1.3" stroke-dasharray="1.6 2.2"/><rect x="406.4" y="534" width="2" height="6.4" fill="#1f7a6e"/><ellipse cx="423.6" cy="549.4" rx="10.2" ry="3" fill="#e0107c" transform="rotate(-8 423.6 549.4)"/><ellipse cx="425" cy="555.8" rx="1.4" ry="0.8" fill="#f07070"/><ellipse cx="412.5" cy="573" rx="5.4" ry="2.1" fill="#6a8a90"/><ellipse cx="412.5" cy="573" rx="2.2" ry="1.5" fill="#2e5a66"/><ellipse cx="439.2" cy="571" rx="7" ry="2" fill="#6a8a90"/><ellipse cx="439.5" cy="571" rx="2.4" ry="1.5" fill="#2e5a66"/><ellipse cx="462" cy="564" rx="2.2" ry="6" fill="#f8c8d0" opacity="0.8"/></g></g><rect x="305.3" y="602.4" width="179" height="22.3" fill="#fff"/><polygon points="408.6,600.5 477.9,600.5 477.9,613.4 474.6,616.9 414.3,616.9" fill="#000"/><text transform="translate(469 602.9) rotate(180)" x="0" y="0" font-size="7" font-weight="bold" fill="#fff" textLength="52.4" lengthAdjust="spacingAndGlyphs" font-family="Liberation Sans,Noto Sans CJK SC,sans-serif">优质数码样张</text><text transform="translate(366.5 602.9) rotate(180)" x="0" y="0" font-size="3.5" font-weight="bold" fill="#111" textLength="52.8" lengthAdjust="spacingAndGlyphs">DIGITAL TEXTILE PRINTING</text><text transform="translate(405.2 602.9) rotate(180)" x="0" y="0" font-size="2.8" fill="#777" textLength="22.8" lengthAdjust="spacingAndGlyphs">DIGITAL PRINT</text><text transform="translate(407.5 606.1) rotate(180)" x="0" y="0" font-size="14.2" fill="#000" textLength="62.6" lengthAdjust="spacingAndGlyphs">Sample</text><text transform="translate(342.6 606.6) rotate(180)" x="0" y="0" font-size="11.6" fill="#000" textLength="25.1" lengthAdjust="spacingAndGlyphs" font-family="Liberation Sans,Noto Sans CJK SC,sans-serif">样张</text>
<line x1="547.3" y1="428.5" x2="547.3" y2="626" stroke="#333" stroke-width="0.6" />
<text x="553.1" y="438.76" font-size="4.9" fill="#d6d6d6" stroke="#d6d6d6" stroke-width="0.13" >File:</text>
<text x="580.8" y="438.76" font-size="4.9" fill="#d6d6d6" stroke="#d6d6d6" stroke-width="0.13" >7201200-1.prn</text>
<text x="553.1" y="450.56" font-size="4.9" fill="#d6d6d6" stroke="#d6d6d6" stroke-width="0.13" >Dpi:</text>
<text x="580.8" y="450.56" font-size="4.9" fill="#d6d6d6" stroke="#d6d6d6" stroke-width="0.13" >720 * 1200</text>
<text x="553.1" y="462.36" font-size="4.9" fill="#d6d6d6" stroke="#d6d6d6" stroke-width="0.13" >Colors:</text>
<text x="580.8" y="462.36" font-size="4.9" fill="#d6d6d6" stroke="#d6d6d6" stroke-width="0.13" >4</text>
<text x="553.1" y="474.16" font-size="4.9" fill="#d6d6d6" stroke="#d6d6d6" stroke-width="0.13" >Bits:</text>
<text x="580.8" y="474.16" font-size="4.9" fill="#d6d6d6" stroke="#d6d6d6" stroke-width="0.13" >2</text>
<text x="553.1" y="485.96" font-size="4.9" fill="#d6d6d6" stroke="#d6d6d6" stroke-width="0.13" >Width:</text>
<text x="580.8" y="485.96" font-size="4.9" fill="#d6d6d6" stroke="#d6d6d6" stroke-width="0.13" >111.72 mm</text>
<text x="610.6" y="485.96" font-size="4.9" fill="#d6d6d6" stroke="#d6d6d6" stroke-width="0.13" >3167 pt</text>
<text x="553.1" y="497.76" font-size="4.9" fill="#d6d6d6" stroke="#d6d6d6" stroke-width="0.13" >Height:</text>
<text x="580.8" y="497.76" font-size="4.9" fill="#d6d6d6" stroke="#d6d6d6" stroke-width="0.13" >121.48 mm</text>
<text x="610.6" y="497.76" font-size="4.9" fill="#d6d6d6" stroke="#d6d6d6" stroke-width="0.13" >5739 pt</text>
<text x="553.1" y="509.56" font-size="4.9" fill="#d6d6d6" stroke="#d6d6d6" stroke-width="0.13" >Area:</text>
<text x="580.8" y="509.56" font-size="4.9" fill="#d6d6d6" stroke="#d6d6d6" stroke-width="0.13" >0.014 m2</text>
<text x="553.1" y="521.36" font-size="4.9" fill="#d6d6d6" stroke="#d6d6d6" stroke-width="0.13" >Print time:</text>
<text x="580.8" y="521.36" font-size="4.9" fill="#d6d6d6" stroke="#d6d6d6" stroke-width="0.13" >0:00:00</text>
<text x="553.1" y="533.16" font-size="4.9" fill="#d6d6d6" stroke="#d6d6d6" stroke-width="0.13" >Progress:</text>
<text x="553.1" y="544.96" font-size="4.9" fill="#d6d6d6" stroke="#d6d6d6" stroke-width="0.13" >Speed:</text>
<text x="580.8" y="544.96" font-size="4.9" fill="#d6d6d6" stroke="#d6d6d6" stroke-width="0.13" >0.00000 m2/h</text>
<line x1="60.2" y1="626.2" x2="663.9" y2="626.2" stroke="#333" stroke-width="0.6" />
<rect x="60.6" y="629.6" width="40.2" height="11.6" fill="#3c8ede"/><text x="64.2" y="637.06" font-size="4.9" fill="#cfe4ff" stroke="#cfe4ff" stroke-width="0.13" >Print task</text>
<text x="104.6" y="637.06" font-size="4.9" fill="#d6d6d6" stroke="#d6d6d6" stroke-width="0.13" >History task</text>
<text x="61.8" y="648.66" font-size="4.9" fill="#d6d6d6" stroke="#d6d6d6" stroke-width="0.13" >Name</text>
<text x="180" y="648.66" font-size="4.9" fill="#d6d6d6" stroke="#d6d6d6" stroke-width="0.13" >Dpi</text>
<text x="243.4" y="648.66" font-size="4.9" fill="#d6d6d6" stroke="#d6d6d6" stroke-width="0.13" >Size</text>
<text x="306.2" y="648.66" font-size="4.9" fill="#d6d6d6" stroke="#d6d6d6" stroke-width="0.13" >Status</text>
<text x="361.5" y="648.66" font-size="4.9" fill="#d6d6d6" stroke="#d6d6d6" stroke-width="0.13" >Start print time</text>
<text x="423.6" y="648.66" font-size="4.9" fill="#d6d6d6" stroke="#d6d6d6" stroke-width="0.13" >Page</text>
<text x="463.2" y="648.66" font-size="4.9" fill="#d6d6d6" stroke="#d6d6d6" stroke-width="0.13" >Path</text>
<rect x="60.6" y="651.6" width="602.4" height="7.2" fill="#2b2b2b"/>
<text x="63.2" y="656.96" font-size="4.9" fill="#d6d6d6" stroke="#d6d6d6" stroke-width="0.13" >7201200-1.prn</text>
<text x="181.2" y="656.96" font-size="4.9" fill="#d6d6d6" stroke="#d6d6d6" stroke-width="0.13" >720 * 1200</text>
<text x="244.6" y="656.96" font-size="4.9" fill="#d6d6d6" stroke="#d6d6d6" stroke-width="0.13" >111.7 * 121.5</text>
<text x="307.2" y="656.96" font-size="4.9" fill="#1fd01f" stroke="#1fd01f" stroke-width="0.13" >Standby</text>
<text x="425" y="656.96" font-size="4.9" fill="#d6d6d6" stroke="#d6d6d6" stroke-width="0.13" >1 / 0</text>
<text x="464.8" y="656.96" font-size="4.9" fill="#d6d6d6" stroke="#d6d6d6" stroke-width="0.13" >C:\Users\Zhou\Desktop\7201200-1.prn</text>
<line x1="60.2" y1="687.5" x2="663.9" y2="687.5" stroke="#333" stroke-width="0.6" />
<line x1="104" y1="688" x2="104" y2="697" stroke="#2c2c2c" stroke-width="0.5" />
<line x1="173" y1="688" x2="173" y2="697" stroke="#2c2c2c" stroke-width="0.5" />
<line x1="240" y1="688" x2="240" y2="697" stroke="#2c2c2c" stroke-width="0.5" />
<line x1="307" y1="688" x2="307" y2="697" stroke="#2c2c2c" stroke-width="0.5" />
<line x1="368" y1="688" x2="368" y2="697" stroke="#2c2c2c" stroke-width="0.5" />
<line x1="441" y1="688" x2="441" y2="697" stroke="#2c2c2c" stroke-width="0.5" />
<g transform="translate(67.3 691.4) scale(1.35)" fill="none" stroke="#b0b0b0" stroke-width="0.55"><rect x="-1.3" y="-2.6" width="2.6" height="3.6" rx="0.6"/><path d="M0 1V3.2M-0.6 -2.6V-3.6M0.6 -2.6V-3.6"/></g>
<text x="74.3" y="694.56" font-size="4.9" fill="#d6d6d6" stroke="#d6d6d6" stroke-width="0.13" >Not connect</text><text x="106.8" y="694.56" font-size="4.9" fill="#d6d6d6" stroke="#d6d6d6" stroke-width="0.13" >X: 0.0 mm</text><text x="174.5" y="694.56" font-size="4.9" fill="#d6d6d6" stroke="#d6d6d6" stroke-width="0.13" >X:</text><text x="241.2" y="694.56" font-size="4.9" fill="#d6d6d6" stroke="#d6d6d6" stroke-width="0.13" >Y: 0.0 mm</text><text x="309" y="694.56" font-size="4.9" fill="#d6d6d6" stroke="#d6d6d6" stroke-width="0.13" >Z: 0.0 mm</text><text x="662" y="694.56" font-size="4.9" fill="#d6d6d6" text-anchor="end" stroke="#d6d6d6" stroke-width="0.13" >Not connect</text></g>
</svg>
</body></html>
